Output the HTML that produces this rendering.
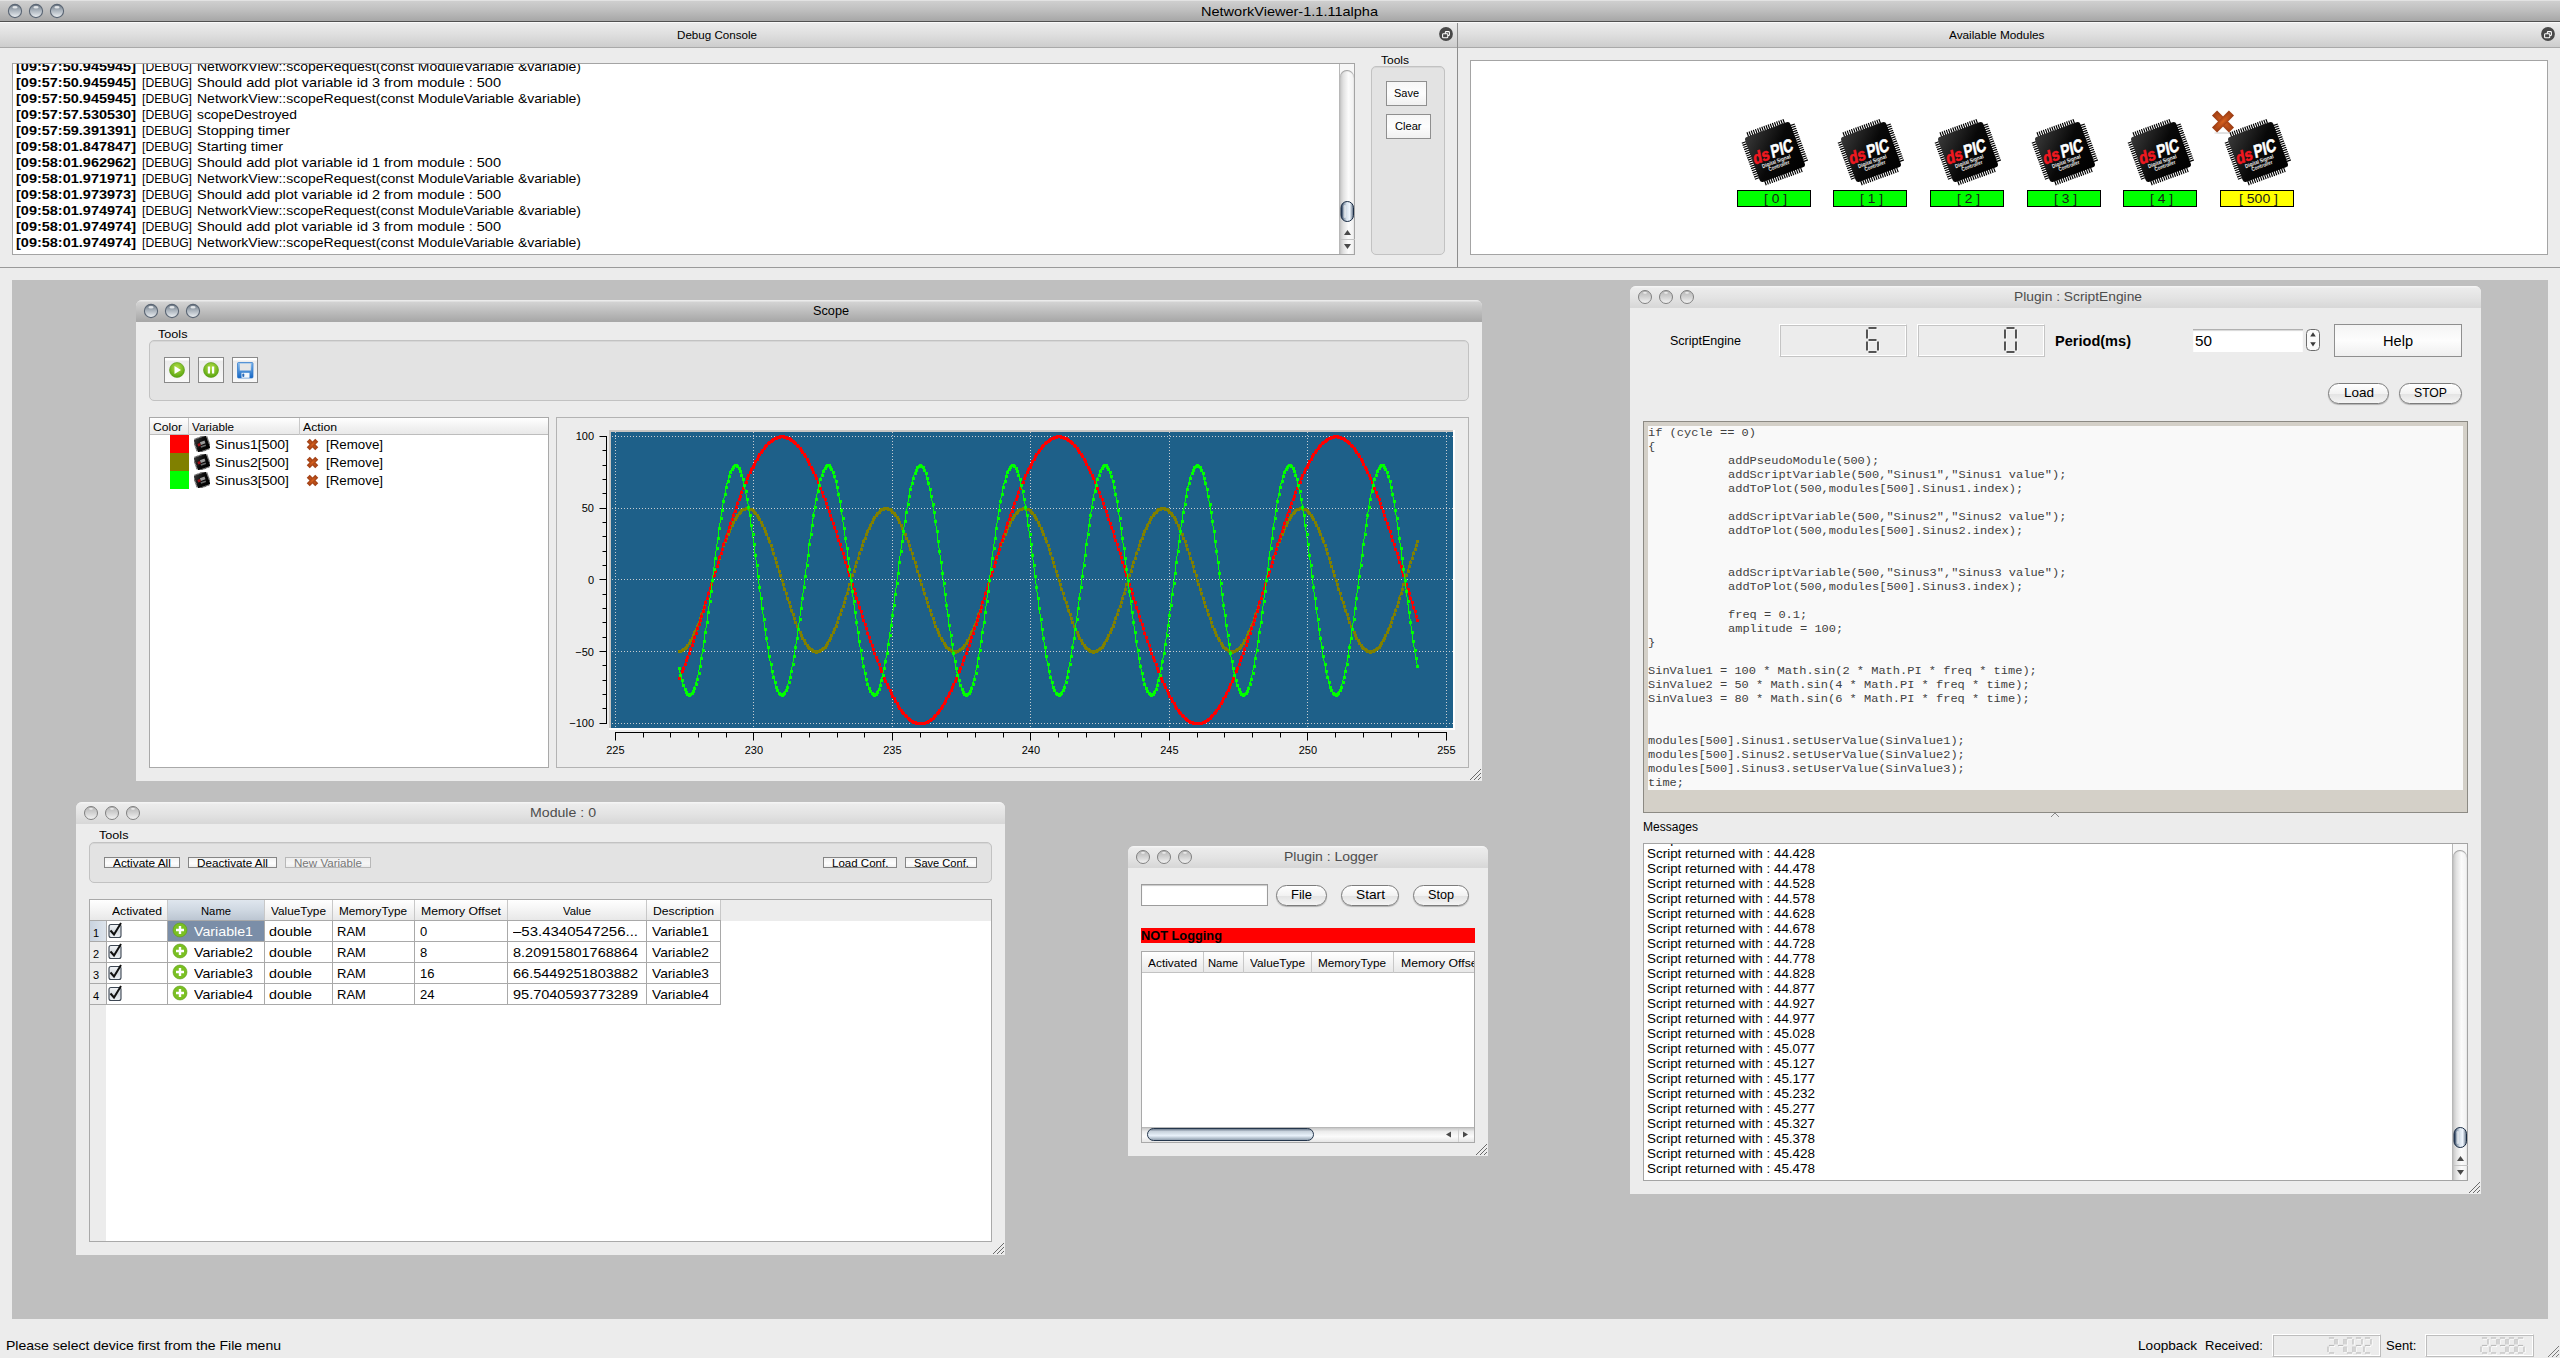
<!DOCTYPE html><html><head><meta charset="utf-8"><title>NetworkViewer</title><style>
html,body{margin:0;padding:0}
body{width:2560px;height:1358px;overflow:hidden;position:relative;background:#ececec;font-family:'Liberation Sans',sans-serif}
.a{position:absolute}
.t{white-space:pre;transform-origin:0 0}
</style></head><body><svg class="a" width="0" height="0" style="left:0;top:0">
<defs>
<linearGradient id="tlg" x1="0" y1="0" x2="0" y2="1">
 <stop offset="0" stop-color="#6f7a86"/><stop offset="0.45" stop-color="#a9b2bb"/><stop offset="1" stop-color="#eef1f4"/></linearGradient>
<linearGradient id="tlgi" x1="0" y1="0" x2="0" y2="1">
 <stop offset="0" stop-color="#b4b4b4"/><stop offset="0.5" stop-color="#d2d2d2"/><stop offset="1" stop-color="#f4f4f4"/></linearGradient>
<linearGradient id="cbg" x1="0" y1="0" x2="0" y2="1">
 <stop offset="0" stop-color="#f4f6f8"/><stop offset="0.5" stop-color="#d6dce2"/><stop offset="1" stop-color="#eef2f6"/></linearGradient>
<linearGradient id="flopg" x1="0" y1="0" x2="0" y2="1">
 <stop offset="0" stop-color="#8cc0f0"/><stop offset="1" stop-color="#1466c4"/></linearGradient>
<linearGradient id="thumbg" x1="0" y1="0" x2="1" y2="0">
 <stop offset="0" stop-color="#1d3150"/><stop offset="0.2" stop-color="#7d8ea2"/><stop offset="0.45" stop-color="#d8e2ec"/><stop offset="0.7" stop-color="#f0f7ff"/><stop offset="1" stop-color="#56667a"/></linearGradient>
<linearGradient id="hthumbg" x1="0" y1="0" x2="0" y2="1">
 <stop offset="0" stop-color="#5d6c7e"/><stop offset="0.25" stop-color="#c9d3dd"/><stop offset="0.6" stop-color="#e9f2fb"/><stop offset="1" stop-color="#8796a6"/></linearGradient>
<linearGradient id="chipg" x1="0" y1="0" x2="1" y2="1">
 <stop offset="0" stop-color="#3a3a3a"/><stop offset="0.5" stop-color="#080808"/><stop offset="1" stop-color="#000"/></linearGradient>
<radialGradient id="xg" cx="0.5" cy="0.5" r="0.7">
 <stop offset="0" stop-color="#d9621f"/><stop offset="1" stop-color="#8f3410"/></radialGradient>
<radialGradient id="greeng" cx="0.5" cy="0.35" r="0.6">
 <stop offset="0" stop-color="#b6e04a"/><stop offset="1" stop-color="#5ea812"/></radialGradient>
</defs></svg><div class="a" style="left:0px;top:0px;width:2560px;height:21px;background:linear-gradient(#e2e2e2 0px,#e2e2e2 1px,#cfcfcf 1px,#bfbfbf 10px,#a9a9a9 20px)"></div>
<div class="a" style="left:0px;top:21px;width:2560px;height:1px;background:#515151"></div>
<div class="a" style="left:0px;top:22px;width:2560px;height:1px;background:#fafafa"></div>
<svg class="a" style="left:7px;top:3px" width="16" height="16"><circle cx="8" cy="8" r="6.6" fill="url(#tlg)" stroke="#5b6674" stroke-width="1.1"/><ellipse cx="8" cy="4.2" rx="2.6" ry="1.2" fill="#fff" opacity="0.75"/></svg>
<svg class="a" style="left:28px;top:3px" width="16" height="16"><circle cx="8" cy="8" r="6.6" fill="url(#tlg)" stroke="#5b6674" stroke-width="1.1"/><ellipse cx="8" cy="4.2" rx="2.6" ry="1.2" fill="#fff" opacity="0.75"/></svg>
<svg class="a" style="left:49px;top:3px" width="16" height="16"><circle cx="8" cy="8" r="6.6" fill="url(#tlg)" stroke="#5b6674" stroke-width="1.1"/><ellipse cx="8" cy="4.2" rx="2.6" ry="1.2" fill="#fff" opacity="0.75"/></svg>
<div class="a t" style="left:1200.50px;top:5px;font-size:13px;line-height:13px;font-family:'Liberation Sans';color:#000;transform:scaleX(1.1168);">NetworkViewer-1.1.11alpha</div>
<div class="a" style="left:0px;top:23px;width:2560px;height:24px;background:linear-gradient(#ececec,#dedede 50%,#cdcdcd)"></div>
<div class="a" style="left:0px;top:47px;width:2560px;height:1px;background:#a9a9a9"></div>
<div class="a" style="left:1457px;top:23px;width:1px;height:245px;background:#8e8e8e"></div>
<div class="a t" style="left:677.00px;top:30px;font-size:11px;line-height:11px;font-family:'Liberation Sans';color:#000;transform:scaleX(1.0550);">Debug Console</div>
<div class="a t" style="left:1949.25px;top:30px;font-size:11px;line-height:11px;font-family:'Liberation Sans';color:#000;transform:scaleX(1.0721);">Available Modules</div>
<svg class="a" style="left:1438px;top:26px" width="16" height="16"><circle cx="8" cy="8" r="6.9" fill="#484848"/><rect x="7.3" y="5.6" width="4.1" height="3.9" rx="0.8" fill="none" stroke="#fff" stroke-width="1.05"/><rect x="4.6" y="7.8" width="5.2" height="3.9" rx="0.8" fill="#484848" stroke="#fff" stroke-width="1.05"/></svg>
<svg class="a" style="left:2540px;top:26px" width="16" height="16"><circle cx="8" cy="8" r="6.9" fill="#484848"/><rect x="7.3" y="5.6" width="4.1" height="3.9" rx="0.8" fill="none" stroke="#fff" stroke-width="1.05"/><rect x="4.6" y="7.8" width="5.2" height="3.9" rx="0.8" fill="#484848" stroke="#fff" stroke-width="1.05"/></svg>
<div class="a" style="left:0px;top:267px;width:2560px;height:1px;background:#9a9a9a"></div>
<div class="a" style="left:12px;top:280px;width:2536px;height:1039px;background:#bfbfbf"></div>
<div class="a" style="left:12px;top:63px;width:1343px;height:192px;background:#fff;border:1px solid #a4a4a4;box-sizing:border-box"></div>
<div class="a" style="left:13px;top:64px;width:1326px;height:190px;overflow:hidden">
<div class="a t" style="left:3.00px;top:-4px;font-size:13px;line-height:13px;font-family:'Liberation Sans';font-weight:bold;color:#000;transform:scaleX(1.1143);">[09:57:50.945945]</div>
<div class="a t" style="left:129.00px;top:-4px;font-size:13px;line-height:13px;font-family:'Liberation Sans';color:#000;transform:scaleX(0.9354);">[DEBUG]</div>
<div class="a t" style="left:184.00px;top:-4px;font-size:13px;line-height:13px;font-family:'Liberation Sans';color:#000;transform:scaleX(1.0772);">NetworkView::scopeRequest(const ModuleVariable &amp;variable)</div>
<div class="a t" style="left:3.00px;top:12px;font-size:13px;line-height:13px;font-family:'Liberation Sans';font-weight:bold;color:#000;transform:scaleX(1.1143);">[09:57:50.945945]</div>
<div class="a t" style="left:129.00px;top:12px;font-size:13px;line-height:13px;font-family:'Liberation Sans';color:#000;transform:scaleX(0.9354);">[DEBUG]</div>
<div class="a t" style="left:184.00px;top:12px;font-size:13px;line-height:13px;font-family:'Liberation Sans';color:#000;transform:scaleX(1.1158);">Should add plot variable id 3 from module : 500</div>
<div class="a t" style="left:3.00px;top:28px;font-size:13px;line-height:13px;font-family:'Liberation Sans';font-weight:bold;color:#000;transform:scaleX(1.1143);">[09:57:50.945945]</div>
<div class="a t" style="left:129.00px;top:28px;font-size:13px;line-height:13px;font-family:'Liberation Sans';color:#000;transform:scaleX(0.9354);">[DEBUG]</div>
<div class="a t" style="left:184.00px;top:28px;font-size:13px;line-height:13px;font-family:'Liberation Sans';color:#000;transform:scaleX(1.0772);">NetworkView::scopeRequest(const ModuleVariable &amp;variable)</div>
<div class="a t" style="left:3.00px;top:44px;font-size:13px;line-height:13px;font-family:'Liberation Sans';font-weight:bold;color:#000;transform:scaleX(1.1143);">[09:57:57.530530]</div>
<div class="a t" style="left:129.00px;top:44px;font-size:13px;line-height:13px;font-family:'Liberation Sans';color:#000;transform:scaleX(0.9354);">[DEBUG]</div>
<div class="a t" style="left:184.00px;top:44px;font-size:13px;line-height:13px;font-family:'Liberation Sans';color:#000;transform:scaleX(1.0645);">scopeDestroyed</div>
<div class="a t" style="left:3.00px;top:60px;font-size:13px;line-height:13px;font-family:'Liberation Sans';font-weight:bold;color:#000;transform:scaleX(1.1143);">[09:57:59.391391]</div>
<div class="a t" style="left:129.00px;top:60px;font-size:13px;line-height:13px;font-family:'Liberation Sans';color:#000;transform:scaleX(0.9354);">[DEBUG]</div>
<div class="a t" style="left:184.00px;top:60px;font-size:13px;line-height:13px;font-family:'Liberation Sans';color:#000;transform:scaleX(1.1095);">Stopping timer</div>
<div class="a t" style="left:3.00px;top:76px;font-size:13px;line-height:13px;font-family:'Liberation Sans';font-weight:bold;color:#000;transform:scaleX(1.1143);">[09:58:01.847847]</div>
<div class="a t" style="left:129.00px;top:76px;font-size:13px;line-height:13px;font-family:'Liberation Sans';color:#000;transform:scaleX(0.9354);">[DEBUG]</div>
<div class="a t" style="left:184.00px;top:76px;font-size:13px;line-height:13px;font-family:'Liberation Sans';color:#000;transform:scaleX(1.1125);">Starting timer</div>
<div class="a t" style="left:3.00px;top:92px;font-size:13px;line-height:13px;font-family:'Liberation Sans';font-weight:bold;color:#000;transform:scaleX(1.1143);">[09:58:01.962962]</div>
<div class="a t" style="left:129.00px;top:92px;font-size:13px;line-height:13px;font-family:'Liberation Sans';color:#000;transform:scaleX(0.9354);">[DEBUG]</div>
<div class="a t" style="left:184.00px;top:92px;font-size:13px;line-height:13px;font-family:'Liberation Sans';color:#000;transform:scaleX(1.1158);">Should add plot variable id 1 from module : 500</div>
<div class="a t" style="left:3.00px;top:108px;font-size:13px;line-height:13px;font-family:'Liberation Sans';font-weight:bold;color:#000;transform:scaleX(1.1143);">[09:58:01.971971]</div>
<div class="a t" style="left:129.00px;top:108px;font-size:13px;line-height:13px;font-family:'Liberation Sans';color:#000;transform:scaleX(0.9354);">[DEBUG]</div>
<div class="a t" style="left:184.00px;top:108px;font-size:13px;line-height:13px;font-family:'Liberation Sans';color:#000;transform:scaleX(1.0772);">NetworkView::scopeRequest(const ModuleVariable &amp;variable)</div>
<div class="a t" style="left:3.00px;top:124px;font-size:13px;line-height:13px;font-family:'Liberation Sans';font-weight:bold;color:#000;transform:scaleX(1.1143);">[09:58:01.973973]</div>
<div class="a t" style="left:129.00px;top:124px;font-size:13px;line-height:13px;font-family:'Liberation Sans';color:#000;transform:scaleX(0.9354);">[DEBUG]</div>
<div class="a t" style="left:184.00px;top:124px;font-size:13px;line-height:13px;font-family:'Liberation Sans';color:#000;transform:scaleX(1.1158);">Should add plot variable id 2 from module : 500</div>
<div class="a t" style="left:3.00px;top:140px;font-size:13px;line-height:13px;font-family:'Liberation Sans';font-weight:bold;color:#000;transform:scaleX(1.1143);">[09:58:01.974974]</div>
<div class="a t" style="left:129.00px;top:140px;font-size:13px;line-height:13px;font-family:'Liberation Sans';color:#000;transform:scaleX(0.9354);">[DEBUG]</div>
<div class="a t" style="left:184.00px;top:140px;font-size:13px;line-height:13px;font-family:'Liberation Sans';color:#000;transform:scaleX(1.0772);">NetworkView::scopeRequest(const ModuleVariable &amp;variable)</div>
<div class="a t" style="left:3.00px;top:156px;font-size:13px;line-height:13px;font-family:'Liberation Sans';font-weight:bold;color:#000;transform:scaleX(1.1143);">[09:58:01.974974]</div>
<div class="a t" style="left:129.00px;top:156px;font-size:13px;line-height:13px;font-family:'Liberation Sans';color:#000;transform:scaleX(0.9354);">[DEBUG]</div>
<div class="a t" style="left:184.00px;top:156px;font-size:13px;line-height:13px;font-family:'Liberation Sans';color:#000;transform:scaleX(1.1158);">Should add plot variable id 3 from module : 500</div>
<div class="a t" style="left:3.00px;top:172px;font-size:13px;line-height:13px;font-family:'Liberation Sans';font-weight:bold;color:#000;transform:scaleX(1.1143);">[09:58:01.974974]</div>
<div class="a t" style="left:129.00px;top:172px;font-size:13px;line-height:13px;font-family:'Liberation Sans';color:#000;transform:scaleX(0.9354);">[DEBUG]</div>
<div class="a t" style="left:184.00px;top:172px;font-size:13px;line-height:13px;font-family:'Liberation Sans';color:#000;transform:scaleX(1.0772);">NetworkView::scopeRequest(const ModuleVariable &amp;variable)</div>
</div>
<div class="a" style="left:1339px;top:64px;width:14px;height:190px;background:#f6f6f6;border-left:1px solid #b8b8b8"></div>
<div class="a" style="left:1340px;top:70px;width:14px;height:184px;border-radius:7px 7px 0 0;background:linear-gradient(90deg,#c6c6c6 0%,#e2e2e2 25%,#fbfbfb 60%,#f0f0f0 100%);box-shadow:inset 0 1px 1px #9a9a9a"></div>
<svg class="a" style="left:1340px;top:201px" width="15" height="21"><rect x="1" y="0.5" width="12.5" height="20" rx="6.2" fill="url(#thumbg)" stroke="#1a2c44" stroke-width="1"/><rect x="3.5" y="4" width="2.5" height="13" rx="1.2" fill="#fff" opacity="0.55"/></svg>
<svg class="a" style="left:1340px;top:224px" width="15" height="30"><line x1="0" y1="15.5" x2="15" y2="15.5" stroke="#c4c4c4"/><path d="M4 11 L7.5 6 L11 11 Z" fill="#4a4a4a"/><path d="M4 20 L11 20 L7.5 25 Z" fill="#4a4a4a"/></svg>
<div class="a t" style="left:1381.00px;top:55px;font-size:11px;line-height:11px;font-family:'Liberation Sans';color:#000;transform:scaleX(1.0904);">Tools</div>
<div class="a" style="left:1371px;top:66px;width:74px;height:189px;background:#e3e3e3;border:1px solid #c2c2c2;border-radius:5px;box-sizing:border-box;box-shadow:inset 0 1px 0 #d6d6d6"></div>
<div class="a" style="left:1386px;top:81px;width:41px;height:25px;background:linear-gradient(#f6f6f6,#fdfdfd 50%,#f0f0f0);border:1px solid #8f8f8f;box-sizing:border-box"></div>
<div class="a t" style="left:1394.00px;top:88px;font-size:11px;line-height:11px;font-family:'Liberation Sans';color:#000;">Save</div>
<div class="a" style="left:1386px;top:114px;width:45px;height:25px;background:linear-gradient(#f6f6f6,#fdfdfd 50%,#f0f0f0);border:1px solid #8f8f8f;box-sizing:border-box"></div>
<div class="a t" style="left:1395.25px;top:121px;font-size:11px;line-height:11px;font-family:'Liberation Sans';color:#000;transform:scaleX(1.0081);">Clear</div>
<div class="a" style="left:1470px;top:60px;width:1078px;height:195px;background:#fff;border:1px solid #a4a4a4;box-sizing:border-box"></div>
<svg class="a" style="left:1700px;top:100px" width="620" height="100"><g transform="translate(75,52) rotate(-20)"><path d="M-20.16 -25.7 H20.16 M-20.16 25.7 H20.16 M-25.7 -20.16 V20.16 M25.7 -20.16 V20.16" fill="none" stroke="#000" stroke-width="5.0" stroke-dasharray="1.2 1.05"/><rect x="-24.0" y="-24.0" width="48.0" height="48.0" rx="3.0" fill="url(#chipg)"/><text x="-23.0" y="5.0" font-family="Liberation Sans" font-weight="bold" font-size="17.0" fill="#f01820" transform="skewX(-8)" textLength="17.0" lengthAdjust="spacingAndGlyphs" stroke="#f01820" stroke-width="0.6">ds</text><text x="-4.0" y="5.0" font-family="Liberation Sans" font-weight="bold" font-size="18.0" fill="#fff" transform="skewX(-8)" textLength="23.0" lengthAdjust="spacingAndGlyphs" stroke="#fff" stroke-width="0.6">PIC</text><text x="-17.0" y="11.0" font-family="Liberation Sans" font-weight="bold" font-size="5.5" fill="#f0f0f0" textLength="30.0" lengthAdjust="spacingAndGlyphs">Digital Signal</text><text x="-12.0" y="16.0" font-family="Liberation Sans" font-weight="bold" font-size="5.5" fill="#f0f0f0" textLength="22.0" lengthAdjust="spacingAndGlyphs">Controller</text></g><g transform="translate(171,52) rotate(-20)"><path d="M-20.16 -25.7 H20.16 M-20.16 25.7 H20.16 M-25.7 -20.16 V20.16 M25.7 -20.16 V20.16" fill="none" stroke="#000" stroke-width="5.0" stroke-dasharray="1.2 1.05"/><rect x="-24.0" y="-24.0" width="48.0" height="48.0" rx="3.0" fill="url(#chipg)"/><text x="-23.0" y="5.0" font-family="Liberation Sans" font-weight="bold" font-size="17.0" fill="#f01820" transform="skewX(-8)" textLength="17.0" lengthAdjust="spacingAndGlyphs" stroke="#f01820" stroke-width="0.6">ds</text><text x="-4.0" y="5.0" font-family="Liberation Sans" font-weight="bold" font-size="18.0" fill="#fff" transform="skewX(-8)" textLength="23.0" lengthAdjust="spacingAndGlyphs" stroke="#fff" stroke-width="0.6">PIC</text><text x="-17.0" y="11.0" font-family="Liberation Sans" font-weight="bold" font-size="5.5" fill="#f0f0f0" textLength="30.0" lengthAdjust="spacingAndGlyphs">Digital Signal</text><text x="-12.0" y="16.0" font-family="Liberation Sans" font-weight="bold" font-size="5.5" fill="#f0f0f0" textLength="22.0" lengthAdjust="spacingAndGlyphs">Controller</text></g><g transform="translate(268,52) rotate(-20)"><path d="M-20.16 -25.7 H20.16 M-20.16 25.7 H20.16 M-25.7 -20.16 V20.16 M25.7 -20.16 V20.16" fill="none" stroke="#000" stroke-width="5.0" stroke-dasharray="1.2 1.05"/><rect x="-24.0" y="-24.0" width="48.0" height="48.0" rx="3.0" fill="url(#chipg)"/><text x="-23.0" y="5.0" font-family="Liberation Sans" font-weight="bold" font-size="17.0" fill="#f01820" transform="skewX(-8)" textLength="17.0" lengthAdjust="spacingAndGlyphs" stroke="#f01820" stroke-width="0.6">ds</text><text x="-4.0" y="5.0" font-family="Liberation Sans" font-weight="bold" font-size="18.0" fill="#fff" transform="skewX(-8)" textLength="23.0" lengthAdjust="spacingAndGlyphs" stroke="#fff" stroke-width="0.6">PIC</text><text x="-17.0" y="11.0" font-family="Liberation Sans" font-weight="bold" font-size="5.5" fill="#f0f0f0" textLength="30.0" lengthAdjust="spacingAndGlyphs">Digital Signal</text><text x="-12.0" y="16.0" font-family="Liberation Sans" font-weight="bold" font-size="5.5" fill="#f0f0f0" textLength="22.0" lengthAdjust="spacingAndGlyphs">Controller</text></g><g transform="translate(365,52) rotate(-20)"><path d="M-20.16 -25.7 H20.16 M-20.16 25.7 H20.16 M-25.7 -20.16 V20.16 M25.7 -20.16 V20.16" fill="none" stroke="#000" stroke-width="5.0" stroke-dasharray="1.2 1.05"/><rect x="-24.0" y="-24.0" width="48.0" height="48.0" rx="3.0" fill="url(#chipg)"/><text x="-23.0" y="5.0" font-family="Liberation Sans" font-weight="bold" font-size="17.0" fill="#f01820" transform="skewX(-8)" textLength="17.0" lengthAdjust="spacingAndGlyphs" stroke="#f01820" stroke-width="0.6">ds</text><text x="-4.0" y="5.0" font-family="Liberation Sans" font-weight="bold" font-size="18.0" fill="#fff" transform="skewX(-8)" textLength="23.0" lengthAdjust="spacingAndGlyphs" stroke="#fff" stroke-width="0.6">PIC</text><text x="-17.0" y="11.0" font-family="Liberation Sans" font-weight="bold" font-size="5.5" fill="#f0f0f0" textLength="30.0" lengthAdjust="spacingAndGlyphs">Digital Signal</text><text x="-12.0" y="16.0" font-family="Liberation Sans" font-weight="bold" font-size="5.5" fill="#f0f0f0" textLength="22.0" lengthAdjust="spacingAndGlyphs">Controller</text></g><g transform="translate(461,52) rotate(-20)"><path d="M-20.16 -25.7 H20.16 M-20.16 25.7 H20.16 M-25.7 -20.16 V20.16 M25.7 -20.16 V20.16" fill="none" stroke="#000" stroke-width="5.0" stroke-dasharray="1.2 1.05"/><rect x="-24.0" y="-24.0" width="48.0" height="48.0" rx="3.0" fill="url(#chipg)"/><text x="-23.0" y="5.0" font-family="Liberation Sans" font-weight="bold" font-size="17.0" fill="#f01820" transform="skewX(-8)" textLength="17.0" lengthAdjust="spacingAndGlyphs" stroke="#f01820" stroke-width="0.6">ds</text><text x="-4.0" y="5.0" font-family="Liberation Sans" font-weight="bold" font-size="18.0" fill="#fff" transform="skewX(-8)" textLength="23.0" lengthAdjust="spacingAndGlyphs" stroke="#fff" stroke-width="0.6">PIC</text><text x="-17.0" y="11.0" font-family="Liberation Sans" font-weight="bold" font-size="5.5" fill="#f0f0f0" textLength="30.0" lengthAdjust="spacingAndGlyphs">Digital Signal</text><text x="-12.0" y="16.0" font-family="Liberation Sans" font-weight="bold" font-size="5.5" fill="#f0f0f0" textLength="22.0" lengthAdjust="spacingAndGlyphs">Controller</text></g><g transform="translate(558,52) rotate(-20)"><path d="M-20.16 -25.7 H20.16 M-20.16 25.7 H20.16 M-25.7 -20.16 V20.16 M25.7 -20.16 V20.16" fill="none" stroke="#000" stroke-width="5.0" stroke-dasharray="1.2 1.05"/><rect x="-24.0" y="-24.0" width="48.0" height="48.0" rx="3.0" fill="url(#chipg)"/><text x="-23.0" y="5.0" font-family="Liberation Sans" font-weight="bold" font-size="17.0" fill="#f01820" transform="skewX(-8)" textLength="17.0" lengthAdjust="spacingAndGlyphs" stroke="#f01820" stroke-width="0.6">ds</text><text x="-4.0" y="5.0" font-family="Liberation Sans" font-weight="bold" font-size="18.0" fill="#fff" transform="skewX(-8)" textLength="23.0" lengthAdjust="spacingAndGlyphs" stroke="#fff" stroke-width="0.6">PIC</text><text x="-17.0" y="11.0" font-family="Liberation Sans" font-weight="bold" font-size="5.5" fill="#f0f0f0" textLength="30.0" lengthAdjust="spacingAndGlyphs">Digital Signal</text><text x="-12.0" y="16.0" font-family="Liberation Sans" font-weight="bold" font-size="5.5" fill="#f0f0f0" textLength="22.0" lengthAdjust="spacingAndGlyphs">Controller</text></g><g transform="translate(523,21.5)"><ellipse cx="0" cy="11.5" rx="9" ry="1" fill="#000" opacity="0.12"/><g transform="rotate(45)"><rect x="-12" y="-3.6" width="24" height="7.2" fill="url(#xg)"/><rect x="-3.6" y="-12" width="7.2" height="24" fill="url(#xg)"/></g></g></svg>
<div class="a" style="left:1737px;top:190px;width:74px;height:17px;background:#00ff00;border:1px solid #000;box-sizing:border-box"></div>
<div class="a t" style="left:1763.50px;top:193px;font-size:12px;line-height:12px;font-family:'Liberation Sans';color:#1a1a1a;transform:scaleX(1.1494);">[ 0 ]</div>
<div class="a" style="left:1833px;top:190px;width:74px;height:17px;background:#00ff00;border:1px solid #000;box-sizing:border-box"></div>
<div class="a t" style="left:1859.50px;top:193px;font-size:12px;line-height:12px;font-family:'Liberation Sans';color:#1a1a1a;transform:scaleX(1.1494);">[ 1 ]</div>
<div class="a" style="left:1930px;top:190px;width:74px;height:17px;background:#00ff00;border:1px solid #000;box-sizing:border-box"></div>
<div class="a t" style="left:1956.50px;top:193px;font-size:12px;line-height:12px;font-family:'Liberation Sans';color:#1a1a1a;transform:scaleX(1.1494);">[ 2 ]</div>
<div class="a" style="left:2027px;top:190px;width:74px;height:17px;background:#00ff00;border:1px solid #000;box-sizing:border-box"></div>
<div class="a t" style="left:2053.50px;top:193px;font-size:12px;line-height:12px;font-family:'Liberation Sans';color:#1a1a1a;transform:scaleX(1.1494);">[ 3 ]</div>
<div class="a" style="left:2123px;top:190px;width:74px;height:17px;background:#00ff00;border:1px solid #000;box-sizing:border-box"></div>
<div class="a t" style="left:2149.50px;top:193px;font-size:12px;line-height:12px;font-family:'Liberation Sans';color:#1a1a1a;transform:scaleX(1.1494);">[ 4 ]</div>
<div class="a" style="left:2220px;top:190px;width:74px;height:17px;background:#ffff00;border:1px solid #000;box-sizing:border-box"></div>
<div class="a t" style="left:2238.50px;top:193px;font-size:12px;line-height:12px;font-family:'Liberation Sans';color:#1a1a1a;transform:scaleX(1.1692);">[ 500 ]</div>
<div class="a" style="left:136px;top:300px;width:1346px;height:481px;background:#ececec;border-radius:6px 6px 0 0;overflow:hidden"><div class="a" style="left:0;top:0;width:1346px;height:22px;background:linear-gradient(#ebebeb 0px,#ebebeb 1px,#d3d3d3 2px,#bcbcbc 12px,#a8a8a8 21px)"></div></div>
<svg class="a" style="left:143px;top:303px" width="16" height="16"><circle cx="8" cy="8" r="6.6" fill="url(#tlg)" stroke="#5b6674" stroke-width="1.1"/><ellipse cx="8" cy="4.2" rx="2.6" ry="1.2" fill="#fff" opacity="0.75"/></svg>
<svg class="a" style="left:164px;top:303px" width="16" height="16"><circle cx="8" cy="8" r="6.6" fill="url(#tlg)" stroke="#5b6674" stroke-width="1.1"/><ellipse cx="8" cy="4.2" rx="2.6" ry="1.2" fill="#fff" opacity="0.75"/></svg>
<svg class="a" style="left:185px;top:303px" width="16" height="16"><circle cx="8" cy="8" r="6.6" fill="url(#tlg)" stroke="#5b6674" stroke-width="1.1"/><ellipse cx="8" cy="4.2" rx="2.6" ry="1.2" fill="#fff" opacity="0.75"/></svg>
<div class="a t" style="left:813.00px;top:304px;font-size:13px;line-height:13px;font-family:'Liberation Sans';color:#000;transform:scaleX(0.9766);">Scope</div>
<div class="a t" style="left:158.00px;top:329px;font-size:11px;line-height:11px;font-family:'Liberation Sans';color:#000;transform:scaleX(1.1488);">Tools</div>
<div class="a" style="left:149px;top:340px;width:1320px;height:61px;background:#e3e3e3;border:1px solid #c2c2c2;border-radius:5px;box-sizing:border-box;box-shadow:inset 0 1px 0 #d6d6d6"></div>
<div class="a" style="left:164px;top:357px;width:26px;height:26px;background:linear-gradient(#ffffff 0px,#ffffff 2px,#ececec 3px,#f3f3f3 60%,#f8f8f8);border:1px solid #8a8a8a;box-sizing:border-box"></div>
<div class="a" style="left:198px;top:357px;width:26px;height:26px;background:linear-gradient(#ffffff 0px,#ffffff 2px,#ececec 3px,#f3f3f3 60%,#f8f8f8);border:1px solid #8a8a8a;box-sizing:border-box"></div>
<div class="a" style="left:232px;top:357px;width:26px;height:26px;background:linear-gradient(#ffffff 0px,#ffffff 2px,#ececec 3px,#f3f3f3 60%,#f8f8f8);border:1px solid #8a8a8a;box-sizing:border-box"></div>
<svg class="a" style="left:164px;top:357px" width="100" height="26"><circle cx="13" cy="13" r="7.5" fill="url(#greeng)" stroke="#5a9a18" stroke-width="0.6"/><path d="M10.5 9 L17 13 L10.5 17 Z" fill="#fff"/><circle cx="47" cy="13" r="7.5" fill="url(#greeng)" stroke="#5a9a18" stroke-width="0.6"/><rect x="43.8" y="9.5" width="2.2" height="7" fill="#fff"/><rect x="48" y="9.5" width="2.2" height="7" fill="#fff"/><rect x="73.5" y="5.5" width="15.5" height="15.5" rx="1" fill="url(#flopg)" stroke="#2a74c8" stroke-width="0.7"/><rect x="75.8" y="6.5" width="11" height="7" fill="#e6e6e6"/><rect x="77.5" y="15.8" width="8" height="5" fill="#f4f8fc"/><rect x="78.3" y="16.5" width="2" height="3.5" rx="1" fill="#2a6ab8"/></svg>
<div class="a" style="left:149px;top:417px;width:400px;height:351px;background:#fff;border:1px solid #a9a9a9;box-sizing:border-box"></div>
<div class="a" style="left:150px;top:418px;width:398px;height:17px;background:linear-gradient(#ffffff,#f3f3f3 50%,#e9e9e9);border-bottom:1px solid #bdbdbd;box-sizing:border-box"></div>
<div class="a" style="left:188px;top:418px;width:1px;height:17px;background:#c9c9c9"></div>
<div class="a" style="left:299px;top:418px;width:1px;height:17px;background:#c9c9c9"></div>
<div class="a t" style="left:153.00px;top:422px;font-size:11px;line-height:11px;font-family:'Liberation Sans';color:#000;transform:scaleX(1.1032);">Color</div>
<div class="a t" style="left:192.00px;top:422px;font-size:11px;line-height:11px;font-family:'Liberation Sans';color:#000;transform:scaleX(1.0622);">Variable</div>
<div class="a t" style="left:303.00px;top:422px;font-size:11px;line-height:11px;font-family:'Liberation Sans';color:#000;transform:scaleX(1.1121);">Action</div>
<div class="a" style="left:170px;top:435px;width:19px;height:18px;background:#ff0000"></div>
<svg class="a" style="left:194px;top:436px" width="16" height="16"><g transform="translate(8,8) rotate(-20)"><path d="M-5.4432 -6.939 H5.4432 M-5.4432 6.939 H5.4432 M-6.939 -5.4432 V5.4432 M6.939 -5.4432 V5.4432" fill="none" stroke="#000" stroke-width="1.35" stroke-dasharray="0.324 0.28350000000000003"/><rect x="-6.48" y="-6.48" width="12.96" height="12.96" rx="0.81" fill="url(#chipg)"/><rect x="-4.32" y="-1.62" width="2.7" height="2.7" fill="#a01018"/><rect x="-1.35" y="-2.43" width="4.86" height="2.97" fill="#9a9a9a"/><rect x="-2.16" y="1.62" width="5.4" height="1.62" fill="#6a6a6a"/></g></svg>
<div class="a t" style="left:215.00px;top:438px;font-size:13px;line-height:13px;font-family:'Liberation Sans';color:#000;transform:scaleX(1.0777);">Sinus1[500]</div>
<svg class="a" style="left:306px;top:438px" width="13" height="14"><g transform="translate(6.5,6.5) rotate(45)"><rect x="-6" y="-2.1" width="12" height="4.2" fill="url(#xg)"/><rect x="-2.1" y="-6" width="4.2" height="12" fill="url(#xg)"/></g></svg>
<div class="a t" style="left:326.00px;top:438px;font-size:13px;line-height:13px;font-family:'Liberation Sans';color:#000;transform:scaleX(1.0246);">[Remove]</div>
<div class="a" style="left:170px;top:453px;width:19px;height:18px;background:#808000"></div>
<svg class="a" style="left:194px;top:454px" width="16" height="16"><g transform="translate(8,8) rotate(-20)"><path d="M-5.4432 -6.939 H5.4432 M-5.4432 6.939 H5.4432 M-6.939 -5.4432 V5.4432 M6.939 -5.4432 V5.4432" fill="none" stroke="#000" stroke-width="1.35" stroke-dasharray="0.324 0.28350000000000003"/><rect x="-6.48" y="-6.48" width="12.96" height="12.96" rx="0.81" fill="url(#chipg)"/><rect x="-4.32" y="-1.62" width="2.7" height="2.7" fill="#a01018"/><rect x="-1.35" y="-2.43" width="4.86" height="2.97" fill="#9a9a9a"/><rect x="-2.16" y="1.62" width="5.4" height="1.62" fill="#6a6a6a"/></g></svg>
<div class="a t" style="left:215.00px;top:456px;font-size:13px;line-height:13px;font-family:'Liberation Sans';color:#000;transform:scaleX(1.0777);">Sinus2[500]</div>
<svg class="a" style="left:306px;top:456px" width="13" height="14"><g transform="translate(6.5,6.5) rotate(45)"><rect x="-6" y="-2.1" width="12" height="4.2" fill="url(#xg)"/><rect x="-2.1" y="-6" width="4.2" height="12" fill="url(#xg)"/></g></svg>
<div class="a t" style="left:326.00px;top:456px;font-size:13px;line-height:13px;font-family:'Liberation Sans';color:#000;transform:scaleX(1.0246);">[Remove]</div>
<div class="a" style="left:170px;top:471px;width:19px;height:18px;background:#00ff00"></div>
<svg class="a" style="left:194px;top:472px" width="16" height="16"><g transform="translate(8,8) rotate(-20)"><path d="M-5.4432 -6.939 H5.4432 M-5.4432 6.939 H5.4432 M-6.939 -5.4432 V5.4432 M6.939 -5.4432 V5.4432" fill="none" stroke="#000" stroke-width="1.35" stroke-dasharray="0.324 0.28350000000000003"/><rect x="-6.48" y="-6.48" width="12.96" height="12.96" rx="0.81" fill="url(#chipg)"/><rect x="-4.32" y="-1.62" width="2.7" height="2.7" fill="#a01018"/><rect x="-1.35" y="-2.43" width="4.86" height="2.97" fill="#9a9a9a"/><rect x="-2.16" y="1.62" width="5.4" height="1.62" fill="#6a6a6a"/></g></svg>
<div class="a t" style="left:215.00px;top:474px;font-size:13px;line-height:13px;font-family:'Liberation Sans';color:#000;transform:scaleX(1.0777);">Sinus3[500]</div>
<svg class="a" style="left:306px;top:474px" width="13" height="14"><g transform="translate(6.5,6.5) rotate(45)"><rect x="-6" y="-2.1" width="12" height="4.2" fill="url(#xg)"/><rect x="-2.1" y="-6" width="4.2" height="12" fill="url(#xg)"/></g></svg>
<div class="a t" style="left:326.00px;top:474px;font-size:13px;line-height:13px;font-family:'Liberation Sans';color:#000;transform:scaleX(1.0246);">[Remove]</div>
<svg class="a" style="left:1468px;top:767px" width="14" height="14"><path d="M2 13 L13 2 M6 13 L13 6 M10 13 L13 10" stroke="#6a6a6a" stroke-width="1"/></svg>
<div class="a" style="left:556px;top:417px;width:913px;height:351px;background:#ececec;border:1px solid #b3b3b3;box-sizing:border-box"></div>
<svg class="a" style="left:0;top:0" width="1500" height="800"><rect x="609" y="430" width="846" height="300" fill="#1e6089"/><rect x="609" y="430" width="846" height="2" fill="#c9c6c3"/><rect x="609" y="430" width="2" height="300" fill="#c9c6c3"/><rect x="1453" y="430" width="2" height="300" fill="#ffffff"/><rect x="609" y="728" width="846" height="2" fill="#ffffff"/><path d="M612 436.5 H1454 M612 508.5 H1454 M612 579.5 H1454 M612 651.5 H1454 M612 723.5 H1454 M615.5 432 V729 M753.5 432 V729 M892.5 432 V729 M1030.5 432 V729 M1169.5 432 V729 M1307.5 432 V729 M1446.5 432 V729" stroke="#c8ccd0" stroke-width="1" stroke-dasharray="1 2" fill="none"/><polyline points="679.1,651.4 680.5,651.0 681.9,650.3 683.3,649.3 684.7,648.1 686.0,646.5 687.4,644.7 688.8,642.7 690.2,640.4 691.6,637.9 693.0,635.1 694.3,632.1 695.7,628.9 697.1,625.6 698.5,622.0 699.9,618.3 701.3,614.4 702.7,610.4 704.0,606.3 705.4,602.0 706.8,597.7 708.2,593.3 709.6,588.8 711.0,584.4 712.4,579.8 713.7,575.3 715.1,570.9 716.5,566.4 717.9,562.0 719.3,557.7 720.7,553.4 722.0,549.3 723.4,545.3 724.8,541.4 726.2,537.7 727.6,534.1 729.0,530.8 730.4,527.6 731.7,524.6 733.1,521.8 734.5,519.3 735.9,517.0 737.3,515.0 738.7,513.2 740.1,511.6 741.4,510.4 742.8,509.4 744.2,508.7 745.6,508.3 747.0,508.1 748.4,508.3 749.7,508.7 751.1,509.4 752.5,510.4 753.9,511.6 755.3,513.2 756.7,515.0 758.1,517.0 759.4,519.3 760.8,521.8 762.2,524.6 763.6,527.6 765.0,530.8 766.4,534.1 767.8,537.7 769.1,541.4 770.5,545.3 771.9,549.3 773.3,553.4 774.7,557.7 776.1,562.0 777.4,566.4 778.8,570.9 780.2,575.3 781.6,579.9 783.0,584.4 784.4,588.8 785.8,593.3 787.1,597.7 788.5,602.0 789.9,606.3 791.3,610.4 792.7,614.4 794.1,618.3 795.5,622.0 796.8,625.6 798.2,628.9 799.6,632.1 801.0,635.1 802.4,637.9 803.8,640.4 805.1,642.7 806.5,644.7 807.9,646.5 809.3,648.1 810.7,649.3 812.1,650.3 813.5,651.0 814.8,651.4 816.2,651.6 817.6,651.4 819.0,651.0 820.4,650.3 821.8,649.3 823.2,648.1 824.5,646.5 825.9,644.7 827.3,642.7 828.7,640.4 830.1,637.9 831.5,635.1 832.8,632.1 834.2,628.9 835.6,625.6 837.0,622.0 838.4,618.3 839.8,614.4 841.2,610.4 842.5,606.3 843.9,602.0 845.3,597.7 846.7,593.3 848.1,588.8 849.5,584.4 850.9,579.8 852.2,575.3 853.6,570.9 855.0,566.4 856.4,562.0 857.8,557.7 859.2,553.4 860.5,549.3 861.9,545.3 863.3,541.4 864.7,537.7 866.1,534.1 867.5,530.8 868.9,527.6 870.2,524.6 871.6,521.8 873.0,519.3 874.4,517.0 875.8,515.0 877.2,513.2 878.6,511.6 879.9,510.4 881.3,509.4 882.7,508.7 884.1,508.3 885.5,508.1 886.9,508.3 888.2,508.7 889.6,509.4 891.0,510.4 892.4,511.6 893.8,513.2 895.2,515.0 896.6,517.0 897.9,519.3 899.3,521.8 900.7,524.6 902.1,527.6 903.5,530.8 904.9,534.1 906.3,537.7 907.6,541.4 909.0,545.3 910.4,549.3 911.8,553.4 913.2,557.7 914.6,562.0 915.9,566.4 917.3,570.9 918.7,575.3 920.1,579.9 921.5,584.4 922.9,588.8 924.3,593.3 925.6,597.7 927.0,602.0 928.4,606.3 929.8,610.4 931.2,614.4 932.6,618.3 934.0,622.0 935.3,625.6 936.7,628.9 938.1,632.1 939.5,635.1 940.9,637.9 942.3,640.4 943.6,642.7 945.0,644.7 946.4,646.5 947.8,648.1 949.2,649.3 950.6,650.3 952.0,651.0 953.3,651.4 954.7,651.6 956.1,651.4 957.5,651.0 958.9,650.3 960.3,649.3 961.7,648.1 963.0,646.5 964.4,644.7 965.8,642.7 967.2,640.4 968.6,637.9 970.0,635.1 971.3,632.1 972.7,628.9 974.1,625.6 975.5,622.0 976.9,618.3 978.3,614.4 979.7,610.4 981.0,606.3 982.4,602.0 983.8,597.7 985.2,593.3 986.6,588.8 988.0,584.4 989.4,579.8 990.7,575.3 992.1,570.9 993.5,566.4 994.9,562.0 996.3,557.7 997.7,553.4 999.0,549.3 1000.4,545.3 1001.8,541.4 1003.2,537.7 1004.6,534.1 1006.0,530.8 1007.4,527.6 1008.7,524.6 1010.1,521.8 1011.5,519.3 1012.9,517.0 1014.3,515.0 1015.7,513.2 1017.1,511.6 1018.4,510.4 1019.8,509.4 1021.2,508.7 1022.6,508.3 1024.0,508.1 1025.4,508.3 1026.7,508.7 1028.1,509.4 1029.5,510.4 1030.9,511.6 1032.3,513.2 1033.7,515.0 1035.1,517.0 1036.4,519.3 1037.8,521.8 1039.2,524.6 1040.6,527.6 1042.0,530.8 1043.4,534.1 1044.8,537.7 1046.1,541.4 1047.5,545.3 1048.9,549.3 1050.3,553.4 1051.7,557.7 1053.1,562.0 1054.4,566.4 1055.8,570.9 1057.2,575.3 1058.6,579.9 1060.0,584.4 1061.4,588.8 1062.8,593.3 1064.1,597.7 1065.5,602.0 1066.9,606.3 1068.3,610.4 1069.7,614.4 1071.1,618.3 1072.5,622.0 1073.8,625.6 1075.2,628.9 1076.6,632.1 1078.0,635.1 1079.4,637.9 1080.8,640.4 1082.1,642.7 1083.5,644.7 1084.9,646.5 1086.3,648.1 1087.7,649.3 1089.1,650.3 1090.5,651.0 1091.8,651.4 1093.2,651.6 1094.6,651.4 1096.0,651.0 1097.4,650.3 1098.8,649.3 1100.2,648.1 1101.5,646.5 1102.9,644.7 1104.3,642.7 1105.7,640.4 1107.1,637.9 1108.5,635.1 1109.8,632.1 1111.2,628.9 1112.6,625.6 1114.0,622.0 1115.4,618.3 1116.8,614.4 1118.2,610.4 1119.5,606.3 1120.9,602.0 1122.3,597.7 1123.7,593.3 1125.1,588.8 1126.5,584.4 1127.9,579.8 1129.2,575.3 1130.6,570.9 1132.0,566.4 1133.4,562.0 1134.8,557.7 1136.2,553.4 1137.5,549.3 1138.9,545.3 1140.3,541.4 1141.7,537.7 1143.1,534.1 1144.5,530.8 1145.9,527.6 1147.2,524.6 1148.6,521.8 1150.0,519.3 1151.4,517.0 1152.8,515.0 1154.2,513.2 1155.6,511.6 1156.9,510.4 1158.3,509.4 1159.7,508.7 1161.1,508.3 1162.5,508.1 1163.9,508.3 1165.2,508.7 1166.6,509.4 1168.0,510.4 1169.4,511.6 1170.8,513.2 1172.2,515.0 1173.6,517.0 1174.9,519.3 1176.3,521.8 1177.7,524.6 1179.1,527.6 1180.5,530.8 1181.9,534.1 1183.3,537.7 1184.6,541.4 1186.0,545.3 1187.4,549.3 1188.8,553.4 1190.2,557.7 1191.6,562.0 1192.9,566.4 1194.3,570.9 1195.7,575.3 1197.1,579.9 1198.5,584.4 1199.9,588.8 1201.3,593.3 1202.6,597.7 1204.0,602.0 1205.4,606.3 1206.8,610.4 1208.2,614.4 1209.6,618.3 1211.0,622.0 1212.3,625.6 1213.7,628.9 1215.1,632.1 1216.5,635.1 1217.9,637.9 1219.3,640.4 1220.6,642.7 1222.0,644.7 1223.4,646.5 1224.8,648.1 1226.2,649.3 1227.6,650.3 1229.0,651.0 1230.3,651.4 1231.7,651.6 1233.1,651.4 1234.5,651.0 1235.9,650.3 1237.3,649.3 1238.7,648.1 1240.0,646.5 1241.4,644.7 1242.8,642.7 1244.2,640.4 1245.6,637.9 1247.0,635.1 1248.3,632.1 1249.7,628.9 1251.1,625.6 1252.5,622.0 1253.9,618.3 1255.3,614.4 1256.7,610.4 1258.0,606.3 1259.4,602.0 1260.8,597.7 1262.2,593.3 1263.6,588.8 1265.0,584.4 1266.4,579.8 1267.7,575.3 1269.1,570.9 1270.5,566.4 1271.9,562.0 1273.3,557.7 1274.7,553.4 1276.0,549.3 1277.4,545.3 1278.8,541.4 1280.2,537.7 1281.6,534.1 1283.0,530.8 1284.4,527.6 1285.7,524.6 1287.1,521.8 1288.5,519.3 1289.9,517.0 1291.3,515.0 1292.7,513.2 1294.1,511.6 1295.4,510.4 1296.8,509.4 1298.2,508.7 1299.6,508.3 1301.0,508.1 1302.4,508.3 1303.7,508.7 1305.1,509.4 1306.5,510.4 1307.9,511.6 1309.3,513.2 1310.7,515.0 1312.1,517.0 1313.4,519.3 1314.8,521.8 1316.2,524.6 1317.6,527.6 1319.0,530.8 1320.4,534.1 1321.8,537.7 1323.1,541.4 1324.5,545.3 1325.9,549.3 1327.3,553.4 1328.7,557.7 1330.1,562.0 1331.4,566.4 1332.8,570.9 1334.2,575.3 1335.6,579.9 1337.0,584.4 1338.4,588.8 1339.8,593.3 1341.1,597.7 1342.5,602.0 1343.9,606.3 1345.3,610.4 1346.7,614.4 1348.1,618.3 1349.5,622.0 1350.8,625.6 1352.2,628.9 1353.6,632.1 1355.0,635.1 1356.4,637.9 1357.8,640.4 1359.1,642.7 1360.5,644.7 1361.9,646.5 1363.3,648.1 1364.7,649.3 1366.1,650.3 1367.5,651.0 1368.8,651.4 1370.2,651.6 1371.6,651.4 1373.0,651.0 1374.4,650.3 1375.8,649.3 1377.2,648.1 1378.5,646.5 1379.9,644.7 1381.3,642.7 1382.7,640.4 1384.1,637.9 1385.5,635.1 1386.8,632.1 1388.2,628.9 1389.6,625.6 1391.0,622.0 1392.4,618.3 1393.8,614.4 1395.2,610.4 1396.5,606.3 1397.9,602.0 1399.3,597.7 1400.7,593.3 1402.1,588.8 1403.5,584.4 1404.9,579.8 1406.2,575.3 1407.6,570.9 1409.0,566.4 1410.4,562.0 1411.8,557.7 1413.2,553.4 1414.5,549.3 1415.9,545.3 1417.3,541.4" fill="none" stroke="#808000" stroke-width="1.0" shape-rendering="crispEdges"/><path d="M679 651h0M680 651h0M682 650h0M683 649h0M685 648h0M686 647h0M687 645h0M689 643h0M690 640h0M692 638h0M693 635h0M694 632h0M696 629h0M697 626h0M699 622h0M700 618h0M701 614h0M703 610h0M704 606h0M705 602h0M707 598h0M708 593h0M710 589h0M711 584h0M712 580h0M714 575h0M715 571h0M717 566h0M718 562h0M719 558h0M721 553h0M722 549h0M723 545h0M725 541h0M726 538h0M728 534h0M729 531h0M730 528h0M732 525h0M733 522h0M735 519h0M736 517h0M737 515h0M739 513h0M740 512h0M741 510h0M743 509h0M744 509h0M746 508h0M747 508h0M748 508h0M750 509h0M751 509h0M753 510h0M754 512h0M755 513h0M757 515h0M758 517h0M759 519h0M761 522h0M762 525h0M764 528h0M765 531h0M766 534h0M768 538h0M769 541h0M771 545h0M772 549h0M773 553h0M775 558h0M776 562h0M777 566h0M779 571h0M780 575h0M782 580h0M783 584h0M784 589h0M786 593h0M787 598h0M789 602h0M790 606h0M791 610h0M793 614h0M794 618h0M795 622h0M797 626h0M798 629h0M800 632h0M801 635h0M802 638h0M804 640h0M805 643h0M807 645h0M808 647h0M809 648h0M811 649h0M812 650h0M813 651h0M815 651h0M816 652h0M818 651h0M819 651h0M820 650h0M822 649h0M823 648h0M825 647h0M826 645h0M827 643h0M829 640h0M830 638h0M831 635h0M833 632h0M834 629h0M836 626h0M837 622h0M838 618h0M840 614h0M841 610h0M843 606h0M844 602h0M845 598h0M847 593h0M848 589h0M849 584h0M851 580h0M852 575h0M854 571h0M855 566h0M856 562h0M858 558h0M859 553h0M861 549h0M862 545h0M863 541h0M865 538h0M866 534h0M867 531h0M869 528h0M870 525h0M872 522h0M873 519h0M874 517h0M876 515h0M877 513h0M879 512h0M880 510h0M881 509h0M883 509h0M884 508h0M885 508h0M887 508h0M888 509h0M890 509h0M891 510h0M892 512h0M894 513h0M895 515h0M897 517h0M898 519h0M899 522h0M901 525h0M902 528h0M903 531h0M905 534h0M906 538h0M908 541h0M909 545h0M910 549h0M912 553h0M913 558h0M915 562h0M916 566h0M917 571h0M919 575h0M920 580h0M921 584h0M923 589h0M924 593h0M926 598h0M927 602h0M928 606h0M930 610h0M931 614h0M933 618h0M934 622h0M935 626h0M937 629h0M938 632h0M939 635h0M941 638h0M942 640h0M944 643h0M945 645h0M946 647h0M948 648h0M949 649h0M951 650h0M952 651h0M953 651h0M955 652h0M956 651h0M957 651h0M959 650h0M960 649h0M962 648h0M963 647h0M964 645h0M966 643h0M967 640h0M969 638h0M970 635h0M971 632h0M973 629h0M974 626h0M976 622h0M977 618h0M978 614h0M980 610h0M981 606h0M982 602h0M984 598h0M985 593h0M987 589h0M988 584h0M989 580h0M991 575h0M992 571h0M994 566h0M995 562h0M996 558h0M998 553h0M999 549h0M1000 545h0M1002 541h0M1003 538h0M1005 534h0M1006 531h0M1007 528h0M1009 525h0M1010 522h0M1012 519h0M1013 517h0M1014 515h0M1016 513h0M1017 512h0M1018 510h0M1020 509h0M1021 509h0M1023 508h0M1024 508h0M1025 508h0M1027 509h0M1028 509h0M1030 510h0M1031 512h0M1032 513h0M1034 515h0M1035 517h0M1036 519h0M1038 522h0M1039 525h0M1041 528h0M1042 531h0M1043 534h0M1045 538h0M1046 541h0M1048 545h0M1049 549h0M1050 553h0M1052 558h0M1053 562h0M1054 566h0M1056 571h0M1057 575h0M1059 580h0M1060 584h0M1061 589h0M1063 593h0M1064 598h0M1066 602h0M1067 606h0M1068 610h0M1070 614h0M1071 618h0M1072 622h0M1074 626h0M1075 629h0M1077 632h0M1078 635h0M1079 638h0M1081 640h0M1082 643h0M1084 645h0M1085 647h0M1086 648h0M1088 649h0M1089 650h0M1090 651h0M1092 651h0M1093 652h0M1095 651h0M1096 651h0M1097 650h0M1099 649h0M1100 648h0M1102 647h0M1103 645h0M1104 643h0M1106 640h0M1107 638h0M1108 635h0M1110 632h0M1111 629h0M1113 626h0M1114 622h0M1115 618h0M1117 614h0M1118 610h0M1120 606h0M1121 602h0M1122 598h0M1124 593h0M1125 589h0M1126 584h0M1128 580h0M1129 575h0M1131 571h0M1132 566h0M1133 562h0M1135 558h0M1136 553h0M1138 549h0M1139 545h0M1140 541h0M1142 538h0M1143 534h0M1144 531h0M1146 528h0M1147 525h0M1149 522h0M1150 519h0M1151 517h0M1153 515h0M1154 513h0M1156 512h0M1157 510h0M1158 509h0M1160 509h0M1161 508h0M1162 508h0M1164 508h0M1165 509h0M1167 509h0M1168 510h0M1169 512h0M1171 513h0M1172 515h0M1174 517h0M1175 519h0M1176 522h0M1178 525h0M1179 528h0M1180 531h0M1182 534h0M1183 538h0M1185 541h0M1186 545h0M1187 549h0M1189 553h0M1190 558h0M1192 562h0M1193 566h0M1194 571h0M1196 575h0M1197 580h0M1198 584h0M1200 589h0M1201 593h0M1203 598h0M1204 602h0M1205 606h0M1207 610h0M1208 614h0M1210 618h0M1211 622h0M1212 626h0M1214 629h0M1215 632h0M1216 635h0M1218 638h0M1219 640h0M1221 643h0M1222 645h0M1223 647h0M1225 648h0M1226 649h0M1228 650h0M1229 651h0M1230 651h0M1232 652h0M1233 651h0M1234 651h0M1236 650h0M1237 649h0M1239 648h0M1240 647h0M1241 645h0M1243 643h0M1244 640h0M1246 638h0M1247 635h0M1248 632h0M1250 629h0M1251 626h0M1253 622h0M1254 618h0M1255 614h0M1257 610h0M1258 606h0M1259 602h0M1261 598h0M1262 593h0M1264 589h0M1265 584h0M1266 580h0M1268 575h0M1269 571h0M1271 566h0M1272 562h0M1273 558h0M1275 553h0M1276 549h0M1277 545h0M1279 541h0M1280 538h0M1282 534h0M1283 531h0M1284 528h0M1286 525h0M1287 522h0M1289 519h0M1290 517h0M1291 515h0M1293 513h0M1294 512h0M1295 510h0M1297 509h0M1298 509h0M1300 508h0M1301 508h0M1302 508h0M1304 509h0M1305 509h0M1307 510h0M1308 512h0M1309 513h0M1311 515h0M1312 517h0M1313 519h0M1315 522h0M1316 525h0M1318 528h0M1319 531h0M1320 534h0M1322 538h0M1323 541h0M1325 545h0M1326 549h0M1327 553h0M1329 558h0M1330 562h0M1331 566h0M1333 571h0M1334 575h0M1336 580h0M1337 584h0M1338 589h0M1340 593h0M1341 598h0M1343 602h0M1344 606h0M1345 610h0M1347 614h0M1348 618h0M1349 622h0M1351 626h0M1352 629h0M1354 632h0M1355 635h0M1356 638h0M1358 640h0M1359 643h0M1361 645h0M1362 647h0M1363 648h0M1365 649h0M1366 650h0M1367 651h0M1369 651h0M1370 652h0M1372 651h0M1373 651h0M1374 650h0M1376 649h0M1377 648h0M1379 647h0M1380 645h0M1381 643h0M1383 640h0M1384 638h0M1385 635h0M1387 632h0M1388 629h0M1390 626h0M1391 622h0M1392 618h0M1394 614h0M1395 610h0M1397 606h0M1398 602h0M1399 598h0M1401 593h0M1402 589h0M1403 584h0M1405 580h0M1406 575h0M1408 571h0M1409 566h0M1410 562h0M1412 558h0M1413 553h0M1415 549h0M1416 545h0M1417 541h0" stroke="#808000" stroke-width="3" stroke-linecap="square" shape-rendering="crispEdges"/><polyline points="679.1,678.0 680.5,674.7 681.9,671.3 683.3,667.8 684.7,664.2 686.0,660.5 687.4,656.7 688.8,652.9 690.2,649.0 691.6,645.0 693.0,640.9 694.3,636.8 695.7,632.7 697.1,628.4 698.5,624.2 699.9,619.9 701.3,615.5 702.7,611.1 704.0,606.7 705.4,602.3 706.8,597.8 708.2,593.3 709.6,588.9 711.0,584.4 712.4,579.8 713.7,575.3 715.1,570.8 716.5,566.4 717.9,561.9 719.3,557.4 720.7,553.0 722.0,548.6 723.4,544.2 724.8,539.8 726.2,535.5 727.6,531.3 729.0,527.0 730.4,522.9 731.7,518.8 733.1,514.7 734.5,510.7 735.9,506.8 737.3,503.0 738.7,499.2 740.1,495.5 741.4,491.9 742.8,488.4 744.2,485.0 745.6,481.7 747.0,478.4 748.4,475.3 749.7,472.2 751.1,469.3 752.5,466.5 753.9,463.8 755.3,461.2 756.7,458.7 758.1,456.4 759.4,454.1 760.8,452.0 762.2,450.1 763.6,448.2 765.0,446.5 766.4,444.9 767.8,443.4 769.1,442.1 770.5,440.9 771.9,439.9 773.3,438.9 774.7,438.2 776.1,437.5 777.4,437.0 778.8,436.7 780.2,436.5 781.6,436.4 783.0,436.5 784.4,436.7 785.8,437.0 787.1,437.5 788.5,438.2 789.9,438.9 791.3,439.9 792.7,440.9 794.1,442.1 795.5,443.4 796.8,444.9 798.2,446.5 799.6,448.2 801.0,450.1 802.4,452.0 803.8,454.1 805.1,456.4 806.5,458.7 807.9,461.2 809.3,463.8 810.7,466.5 812.1,469.3 813.5,472.2 814.8,475.3 816.2,478.4 817.6,481.7 819.0,485.0 820.4,488.4 821.8,491.9 823.2,495.5 824.5,499.2 825.9,503.0 827.3,506.8 828.7,510.7 830.1,514.7 831.5,518.8 832.8,522.9 834.2,527.0 835.6,531.3 837.0,535.5 838.4,539.8 839.8,544.2 841.2,548.6 842.5,553.0 843.9,557.4 845.3,561.9 846.7,566.4 848.1,570.8 849.5,575.3 850.9,579.9 852.2,584.4 853.6,588.9 855.0,593.3 856.4,597.8 857.8,602.3 859.2,606.7 860.5,611.1 861.9,615.5 863.3,619.9 864.7,624.2 866.1,628.4 867.5,632.7 868.9,636.8 870.2,640.9 871.6,645.0 873.0,649.0 874.4,652.9 875.8,656.7 877.2,660.5 878.6,664.2 879.9,667.8 881.3,671.3 882.7,674.7 884.1,678.0 885.5,681.3 886.9,684.4 888.2,687.5 889.6,690.4 891.0,693.2 892.4,695.9 893.8,698.5 895.2,701.0 896.6,703.3 897.9,705.6 899.3,707.7 900.7,709.6 902.1,711.5 903.5,713.2 904.9,714.8 906.3,716.3 907.6,717.6 909.0,718.8 910.4,719.8 911.8,720.8 913.2,721.5 914.6,722.2 915.9,722.7 917.3,723.0 918.7,723.2 920.1,723.3 921.5,723.2 922.9,723.0 924.3,722.7 925.6,722.2 927.0,721.5 928.4,720.8 929.8,719.8 931.2,718.8 932.6,717.6 934.0,716.3 935.3,714.8 936.7,713.2 938.1,711.5 939.5,709.6 940.9,707.7 942.3,705.6 943.6,703.3 945.0,701.0 946.4,698.5 947.8,695.9 949.2,693.2 950.6,690.4 952.0,687.5 953.3,684.4 954.7,681.3 956.1,678.0 957.5,674.7 958.9,671.3 960.3,667.8 961.7,664.2 963.0,660.5 964.4,656.7 965.8,652.9 967.2,649.0 968.6,645.0 970.0,640.9 971.3,636.8 972.7,632.7 974.1,628.4 975.5,624.2 976.9,619.9 978.3,615.5 979.7,611.1 981.0,606.7 982.4,602.3 983.8,597.8 985.2,593.3 986.6,588.9 988.0,584.4 989.4,579.8 990.7,575.3 992.1,570.8 993.5,566.4 994.9,561.9 996.3,557.4 997.7,553.0 999.0,548.6 1000.4,544.2 1001.8,539.8 1003.2,535.5 1004.6,531.3 1006.0,527.0 1007.4,522.9 1008.7,518.8 1010.1,514.7 1011.5,510.7 1012.9,506.8 1014.3,503.0 1015.7,499.2 1017.1,495.5 1018.4,491.9 1019.8,488.4 1021.2,485.0 1022.6,481.7 1024.0,478.4 1025.4,475.3 1026.7,472.2 1028.1,469.3 1029.5,466.5 1030.9,463.8 1032.3,461.2 1033.7,458.7 1035.1,456.4 1036.4,454.1 1037.8,452.0 1039.2,450.1 1040.6,448.2 1042.0,446.5 1043.4,444.9 1044.8,443.4 1046.1,442.1 1047.5,440.9 1048.9,439.9 1050.3,438.9 1051.7,438.2 1053.1,437.5 1054.4,437.0 1055.8,436.7 1057.2,436.5 1058.6,436.4 1060.0,436.5 1061.4,436.7 1062.8,437.0 1064.1,437.5 1065.5,438.2 1066.9,438.9 1068.3,439.9 1069.7,440.9 1071.1,442.1 1072.5,443.4 1073.8,444.9 1075.2,446.5 1076.6,448.2 1078.0,450.1 1079.4,452.0 1080.8,454.1 1082.1,456.4 1083.5,458.7 1084.9,461.2 1086.3,463.8 1087.7,466.5 1089.1,469.3 1090.5,472.2 1091.8,475.3 1093.2,478.4 1094.6,481.7 1096.0,485.0 1097.4,488.4 1098.8,491.9 1100.2,495.5 1101.5,499.2 1102.9,503.0 1104.3,506.8 1105.7,510.7 1107.1,514.7 1108.5,518.8 1109.8,522.9 1111.2,527.0 1112.6,531.3 1114.0,535.5 1115.4,539.8 1116.8,544.2 1118.2,548.6 1119.5,553.0 1120.9,557.4 1122.3,561.9 1123.7,566.4 1125.1,570.8 1126.5,575.3 1127.9,579.9 1129.2,584.4 1130.6,588.9 1132.0,593.3 1133.4,597.8 1134.8,602.3 1136.2,606.7 1137.5,611.1 1138.9,615.5 1140.3,619.9 1141.7,624.2 1143.1,628.4 1144.5,632.7 1145.9,636.8 1147.2,640.9 1148.6,645.0 1150.0,649.0 1151.4,652.9 1152.8,656.7 1154.2,660.5 1155.6,664.2 1156.9,667.8 1158.3,671.3 1159.7,674.7 1161.1,678.0 1162.5,681.3 1163.9,684.4 1165.2,687.5 1166.6,690.4 1168.0,693.2 1169.4,695.9 1170.8,698.5 1172.2,701.0 1173.6,703.3 1174.9,705.6 1176.3,707.7 1177.7,709.6 1179.1,711.5 1180.5,713.2 1181.9,714.8 1183.3,716.3 1184.6,717.6 1186.0,718.8 1187.4,719.8 1188.8,720.8 1190.2,721.5 1191.6,722.2 1192.9,722.7 1194.3,723.0 1195.7,723.2 1197.1,723.3 1198.5,723.2 1199.9,723.0 1201.3,722.7 1202.6,722.2 1204.0,721.5 1205.4,720.8 1206.8,719.8 1208.2,718.8 1209.6,717.6 1211.0,716.3 1212.3,714.8 1213.7,713.2 1215.1,711.5 1216.5,709.6 1217.9,707.7 1219.3,705.6 1220.6,703.3 1222.0,701.0 1223.4,698.5 1224.8,695.9 1226.2,693.2 1227.6,690.4 1229.0,687.5 1230.3,684.4 1231.7,681.3 1233.1,678.0 1234.5,674.7 1235.9,671.3 1237.3,667.8 1238.7,664.2 1240.0,660.5 1241.4,656.7 1242.8,652.9 1244.2,649.0 1245.6,645.0 1247.0,640.9 1248.3,636.8 1249.7,632.7 1251.1,628.4 1252.5,624.2 1253.9,619.9 1255.3,615.5 1256.7,611.1 1258.0,606.7 1259.4,602.3 1260.8,597.8 1262.2,593.3 1263.6,588.9 1265.0,584.4 1266.4,579.8 1267.7,575.3 1269.1,570.8 1270.5,566.4 1271.9,561.9 1273.3,557.4 1274.7,553.0 1276.0,548.6 1277.4,544.2 1278.8,539.8 1280.2,535.5 1281.6,531.3 1283.0,527.0 1284.4,522.9 1285.7,518.8 1287.1,514.7 1288.5,510.7 1289.9,506.8 1291.3,503.0 1292.7,499.2 1294.1,495.5 1295.4,491.9 1296.8,488.4 1298.2,485.0 1299.6,481.7 1301.0,478.4 1302.4,475.3 1303.7,472.2 1305.1,469.3 1306.5,466.5 1307.9,463.8 1309.3,461.2 1310.7,458.7 1312.1,456.4 1313.4,454.1 1314.8,452.0 1316.2,450.1 1317.6,448.2 1319.0,446.5 1320.4,444.9 1321.8,443.4 1323.1,442.1 1324.5,440.9 1325.9,439.9 1327.3,438.9 1328.7,438.2 1330.1,437.5 1331.4,437.0 1332.8,436.7 1334.2,436.5 1335.6,436.4 1337.0,436.5 1338.4,436.7 1339.8,437.0 1341.1,437.5 1342.5,438.2 1343.9,438.9 1345.3,439.9 1346.7,440.9 1348.1,442.1 1349.5,443.4 1350.8,444.9 1352.2,446.5 1353.6,448.2 1355.0,450.1 1356.4,452.0 1357.8,454.1 1359.1,456.4 1360.5,458.7 1361.9,461.2 1363.3,463.8 1364.7,466.5 1366.1,469.3 1367.5,472.2 1368.8,475.3 1370.2,478.4 1371.6,481.7 1373.0,485.0 1374.4,488.4 1375.8,491.9 1377.2,495.5 1378.5,499.2 1379.9,503.0 1381.3,506.8 1382.7,510.7 1384.1,514.7 1385.5,518.8 1386.8,522.9 1388.2,527.0 1389.6,531.3 1391.0,535.5 1392.4,539.8 1393.8,544.2 1395.2,548.6 1396.5,553.0 1397.9,557.4 1399.3,561.9 1400.7,566.4 1402.1,570.8 1403.5,575.3 1404.9,579.9 1406.2,584.4 1407.6,588.9 1409.0,593.3 1410.4,597.8 1411.8,602.3 1413.2,606.7 1414.5,611.1 1415.9,615.5 1417.3,619.9" fill="none" stroke="#ff0000" stroke-width="1.0" shape-rendering="crispEdges"/><path d="M679 678h0M680 675h0M682 671h0M683 668h0M685 664h0M686 660h0M687 657h0M689 653h0M690 649h0M692 645h0M693 641h0M694 637h0M696 633h0M697 628h0M699 624h0M700 620h0M701 616h0M703 611h0M704 607h0M705 602h0M707 598h0M708 593h0M710 589h0M711 584h0M712 580h0M714 575h0M715 571h0M717 566h0M718 562h0M719 557h0M721 553h0M722 549h0M723 544h0M725 540h0M726 536h0M728 531h0M729 527h0M730 523h0M732 519h0M733 515h0M735 511h0M736 507h0M737 503h0M739 499h0M740 496h0M741 492h0M743 488h0M744 485h0M746 482h0M747 478h0M748 475h0M750 472h0M751 469h0M753 467h0M754 464h0M755 461h0M757 459h0M758 456h0M759 454h0M761 452h0M762 450h0M764 448h0M765 446h0M766 445h0M768 443h0M769 442h0M771 441h0M772 440h0M773 439h0M775 438h0M776 438h0M777 437h0M779 437h0M780 436h0M782 436h0M783 436h0M784 437h0M786 437h0M787 438h0M789 438h0M790 439h0M791 440h0M793 441h0M794 442h0M795 443h0M797 445h0M798 446h0M800 448h0M801 450h0M802 452h0M804 454h0M805 456h0M807 459h0M808 461h0M809 464h0M811 467h0M812 469h0M813 472h0M815 475h0M816 478h0M818 482h0M819 485h0M820 488h0M822 492h0M823 496h0M825 499h0M826 503h0M827 507h0M829 511h0M830 515h0M831 519h0M833 523h0M834 527h0M836 531h0M837 536h0M838 540h0M840 544h0M841 549h0M843 553h0M844 557h0M845 562h0M847 566h0M848 571h0M849 575h0M851 580h0M852 584h0M854 589h0M855 593h0M856 598h0M858 602h0M859 607h0M861 611h0M862 616h0M863 620h0M865 624h0M866 628h0M867 633h0M869 637h0M870 641h0M872 645h0M873 649h0M874 653h0M876 657h0M877 660h0M879 664h0M880 668h0M881 671h0M883 675h0M884 678h0M885 681h0M887 684h0M888 687h0M890 690h0M891 693h0M892 696h0M894 698h0M895 701h0M897 703h0M898 706h0M899 708h0M901 710h0M902 712h0M903 713h0M905 715h0M906 716h0M908 718h0M909 719h0M910 720h0M912 721h0M913 722h0M915 722h0M916 723h0M917 723h0M919 723h0M920 723h0M921 723h0M923 723h0M924 723h0M926 722h0M927 722h0M928 721h0M930 720h0M931 719h0M933 718h0M934 716h0M935 715h0M937 713h0M938 712h0M939 710h0M941 708h0M942 706h0M944 703h0M945 701h0M946 698h0M948 696h0M949 693h0M951 690h0M952 687h0M953 684h0M955 681h0M956 678h0M957 675h0M959 671h0M960 668h0M962 664h0M963 660h0M964 657h0M966 653h0M967 649h0M969 645h0M970 641h0M971 637h0M973 633h0M974 628h0M976 624h0M977 620h0M978 616h0M980 611h0M981 607h0M982 602h0M984 598h0M985 593h0M987 589h0M988 584h0M989 580h0M991 575h0M992 571h0M994 566h0M995 562h0M996 557h0M998 553h0M999 549h0M1000 544h0M1002 540h0M1003 536h0M1005 531h0M1006 527h0M1007 523h0M1009 519h0M1010 515h0M1012 511h0M1013 507h0M1014 503h0M1016 499h0M1017 496h0M1018 492h0M1020 488h0M1021 485h0M1023 482h0M1024 478h0M1025 475h0M1027 472h0M1028 469h0M1030 467h0M1031 464h0M1032 461h0M1034 459h0M1035 456h0M1036 454h0M1038 452h0M1039 450h0M1041 448h0M1042 446h0M1043 445h0M1045 443h0M1046 442h0M1048 441h0M1049 440h0M1050 439h0M1052 438h0M1053 438h0M1054 437h0M1056 437h0M1057 436h0M1059 436h0M1060 436h0M1061 437h0M1063 437h0M1064 438h0M1066 438h0M1067 439h0M1068 440h0M1070 441h0M1071 442h0M1072 443h0M1074 445h0M1075 446h0M1077 448h0M1078 450h0M1079 452h0M1081 454h0M1082 456h0M1084 459h0M1085 461h0M1086 464h0M1088 467h0M1089 469h0M1090 472h0M1092 475h0M1093 478h0M1095 482h0M1096 485h0M1097 488h0M1099 492h0M1100 496h0M1102 499h0M1103 503h0M1104 507h0M1106 511h0M1107 515h0M1108 519h0M1110 523h0M1111 527h0M1113 531h0M1114 536h0M1115 540h0M1117 544h0M1118 549h0M1120 553h0M1121 557h0M1122 562h0M1124 566h0M1125 571h0M1126 575h0M1128 580h0M1129 584h0M1131 589h0M1132 593h0M1133 598h0M1135 602h0M1136 607h0M1138 611h0M1139 616h0M1140 620h0M1142 624h0M1143 628h0M1144 633h0M1146 637h0M1147 641h0M1149 645h0M1150 649h0M1151 653h0M1153 657h0M1154 660h0M1156 664h0M1157 668h0M1158 671h0M1160 675h0M1161 678h0M1162 681h0M1164 684h0M1165 687h0M1167 690h0M1168 693h0M1169 696h0M1171 698h0M1172 701h0M1174 703h0M1175 706h0M1176 708h0M1178 710h0M1179 712h0M1180 713h0M1182 715h0M1183 716h0M1185 718h0M1186 719h0M1187 720h0M1189 721h0M1190 722h0M1192 722h0M1193 723h0M1194 723h0M1196 723h0M1197 723h0M1198 723h0M1200 723h0M1201 723h0M1203 722h0M1204 722h0M1205 721h0M1207 720h0M1208 719h0M1210 718h0M1211 716h0M1212 715h0M1214 713h0M1215 712h0M1216 710h0M1218 708h0M1219 706h0M1221 703h0M1222 701h0M1223 698h0M1225 696h0M1226 693h0M1228 690h0M1229 687h0M1230 684h0M1232 681h0M1233 678h0M1234 675h0M1236 671h0M1237 668h0M1239 664h0M1240 660h0M1241 657h0M1243 653h0M1244 649h0M1246 645h0M1247 641h0M1248 637h0M1250 633h0M1251 628h0M1253 624h0M1254 620h0M1255 616h0M1257 611h0M1258 607h0M1259 602h0M1261 598h0M1262 593h0M1264 589h0M1265 584h0M1266 580h0M1268 575h0M1269 571h0M1271 566h0M1272 562h0M1273 557h0M1275 553h0M1276 549h0M1277 544h0M1279 540h0M1280 536h0M1282 531h0M1283 527h0M1284 523h0M1286 519h0M1287 515h0M1289 511h0M1290 507h0M1291 503h0M1293 499h0M1294 496h0M1295 492h0M1297 488h0M1298 485h0M1300 482h0M1301 478h0M1302 475h0M1304 472h0M1305 469h0M1307 467h0M1308 464h0M1309 461h0M1311 459h0M1312 456h0M1313 454h0M1315 452h0M1316 450h0M1318 448h0M1319 446h0M1320 445h0M1322 443h0M1323 442h0M1325 441h0M1326 440h0M1327 439h0M1329 438h0M1330 438h0M1331 437h0M1333 437h0M1334 436h0M1336 436h0M1337 436h0M1338 437h0M1340 437h0M1341 438h0M1343 438h0M1344 439h0M1345 440h0M1347 441h0M1348 442h0M1349 443h0M1351 445h0M1352 446h0M1354 448h0M1355 450h0M1356 452h0M1358 454h0M1359 456h0M1361 459h0M1362 461h0M1363 464h0M1365 467h0M1366 469h0M1367 472h0M1369 475h0M1370 478h0M1372 482h0M1373 485h0M1374 488h0M1376 492h0M1377 496h0M1379 499h0M1380 503h0M1381 507h0M1383 511h0M1384 515h0M1385 519h0M1387 523h0M1388 527h0M1390 531h0M1391 536h0M1392 540h0M1394 544h0M1395 549h0M1397 553h0M1398 557h0M1399 562h0M1401 566h0M1402 571h0M1403 575h0M1405 580h0M1406 584h0M1408 589h0M1409 593h0M1410 598h0M1412 602h0M1413 607h0M1415 611h0M1416 616h0M1417 620h0" stroke="#ff0000" stroke-width="3" stroke-linecap="square" shape-rendering="crispEdges"/><polyline points="679.1,668.3 680.5,674.8 681.9,680.4 683.3,685.2 684.7,689.0 686.0,691.8 687.4,693.7 688.8,694.6 690.2,694.4 691.6,693.2 693.0,691.0 694.3,687.8 695.7,683.7 697.1,678.6 698.5,672.7 699.9,665.9 701.3,658.4 702.7,650.2 704.0,641.3 705.4,631.9 706.8,622.1 708.2,611.9 709.6,601.4 711.0,590.6 712.4,579.8 713.7,569.1 715.1,558.3 716.5,547.8 717.9,537.6 719.3,527.8 720.7,518.4 722.0,509.5 723.4,501.3 724.8,493.8 726.2,487.0 727.6,481.1 729.0,476.0 730.4,471.9 731.7,468.7 733.1,466.5 734.5,465.3 735.9,465.1 737.3,466.0 738.7,467.9 740.1,470.7 741.4,474.5 742.8,479.3 744.2,484.9 745.6,491.4 747.0,498.7 748.4,506.7 749.7,515.3 751.1,524.6 752.5,534.3 753.9,544.4 755.3,554.8 756.7,565.5 758.1,576.2 759.4,587.1 760.8,597.8 762.2,608.4 763.6,618.7 765.0,628.7 766.4,638.3 767.8,647.3 769.1,655.7 770.5,663.5 771.9,670.5 773.3,676.7 774.7,682.1 776.1,686.6 777.4,690.1 778.8,692.6 780.2,694.1 781.6,694.6 783.0,694.1 784.4,692.6 785.8,690.1 787.1,686.6 788.5,682.1 789.9,676.7 791.3,670.5 792.7,663.5 794.1,655.7 795.5,647.3 796.8,638.3 798.2,628.7 799.6,618.7 801.0,608.4 802.4,597.8 803.8,587.1 805.1,576.2 806.5,565.5 807.9,554.8 809.3,544.4 810.7,534.3 812.1,524.6 813.5,515.3 814.8,506.7 816.2,498.7 817.6,491.4 819.0,484.9 820.4,479.3 821.8,474.5 823.2,470.7 824.5,467.9 825.9,466.0 827.3,465.1 828.7,465.3 830.1,466.5 831.5,468.7 832.8,471.9 834.2,476.0 835.6,481.1 837.0,487.0 838.4,493.8 839.8,501.3 841.2,509.5 842.5,518.4 843.9,527.8 845.3,537.6 846.7,547.8 848.1,558.3 849.5,569.1 850.9,579.9 852.2,590.6 853.6,601.4 855.0,611.9 856.4,622.1 857.8,631.9 859.2,641.3 860.5,650.2 861.9,658.4 863.3,665.9 864.7,672.7 866.1,678.6 867.5,683.7 868.9,687.8 870.2,691.0 871.6,693.2 873.0,694.4 874.4,694.6 875.8,693.7 877.2,691.8 878.6,689.0 879.9,685.2 881.3,680.4 882.7,674.8 884.1,668.3 885.5,661.0 886.9,653.0 888.2,644.4 889.6,635.1 891.0,625.4 892.4,615.3 893.8,604.9 895.2,594.2 896.6,583.5 897.9,572.6 899.3,561.9 900.7,551.3 902.1,541.0 903.5,531.0 904.9,521.4 906.3,512.4 907.6,504.0 909.0,496.2 910.4,489.2 911.8,483.0 913.2,477.6 914.6,473.1 915.9,469.6 917.3,467.1 918.7,465.6 920.1,465.1 921.5,465.6 922.9,467.1 924.3,469.6 925.6,473.1 927.0,477.6 928.4,483.0 929.8,489.2 931.2,496.2 932.6,504.0 934.0,512.4 935.3,521.4 936.7,531.0 938.1,541.0 939.5,551.3 940.9,561.9 942.3,572.6 943.6,583.5 945.0,594.2 946.4,604.9 947.8,615.3 949.2,625.4 950.6,635.1 952.0,644.4 953.3,653.0 954.7,661.0 956.1,668.3 957.5,674.8 958.9,680.4 960.3,685.2 961.7,689.0 963.0,691.8 964.4,693.7 965.8,694.6 967.2,694.4 968.6,693.2 970.0,691.0 971.3,687.8 972.7,683.7 974.1,678.6 975.5,672.7 976.9,665.9 978.3,658.4 979.7,650.2 981.0,641.3 982.4,631.9 983.8,622.1 985.2,611.9 986.6,601.4 988.0,590.6 989.4,579.8 990.7,569.1 992.1,558.3 993.5,547.8 994.9,537.6 996.3,527.8 997.7,518.4 999.0,509.5 1000.4,501.3 1001.8,493.8 1003.2,487.0 1004.6,481.1 1006.0,476.0 1007.4,471.9 1008.7,468.7 1010.1,466.5 1011.5,465.3 1012.9,465.1 1014.3,466.0 1015.7,467.9 1017.1,470.7 1018.4,474.5 1019.8,479.3 1021.2,484.9 1022.6,491.4 1024.0,498.7 1025.4,506.7 1026.7,515.3 1028.1,524.6 1029.5,534.3 1030.9,544.4 1032.3,554.8 1033.7,565.5 1035.1,576.2 1036.4,587.1 1037.8,597.8 1039.2,608.4 1040.6,618.7 1042.0,628.7 1043.4,638.3 1044.8,647.3 1046.1,655.7 1047.5,663.5 1048.9,670.5 1050.3,676.7 1051.7,682.1 1053.1,686.6 1054.4,690.1 1055.8,692.6 1057.2,694.1 1058.6,694.6 1060.0,694.1 1061.4,692.6 1062.8,690.1 1064.1,686.6 1065.5,682.1 1066.9,676.7 1068.3,670.5 1069.7,663.5 1071.1,655.7 1072.5,647.3 1073.8,638.3 1075.2,628.7 1076.6,618.7 1078.0,608.4 1079.4,597.8 1080.8,587.1 1082.1,576.2 1083.5,565.5 1084.9,554.8 1086.3,544.4 1087.7,534.3 1089.1,524.6 1090.5,515.3 1091.8,506.7 1093.2,498.7 1094.6,491.4 1096.0,484.9 1097.4,479.3 1098.8,474.5 1100.2,470.7 1101.5,467.9 1102.9,466.0 1104.3,465.1 1105.7,465.3 1107.1,466.5 1108.5,468.7 1109.8,471.9 1111.2,476.0 1112.6,481.1 1114.0,487.0 1115.4,493.8 1116.8,501.3 1118.2,509.5 1119.5,518.4 1120.9,527.8 1122.3,537.6 1123.7,547.8 1125.1,558.3 1126.5,569.1 1127.9,579.9 1129.2,590.6 1130.6,601.4 1132.0,611.9 1133.4,622.1 1134.8,631.9 1136.2,641.3 1137.5,650.2 1138.9,658.4 1140.3,665.9 1141.7,672.7 1143.1,678.6 1144.5,683.7 1145.9,687.8 1147.2,691.0 1148.6,693.2 1150.0,694.4 1151.4,694.6 1152.8,693.7 1154.2,691.8 1155.6,689.0 1156.9,685.2 1158.3,680.4 1159.7,674.8 1161.1,668.3 1162.5,661.0 1163.9,653.0 1165.2,644.4 1166.6,635.1 1168.0,625.4 1169.4,615.3 1170.8,604.9 1172.2,594.2 1173.6,583.5 1174.9,572.6 1176.3,561.9 1177.7,551.3 1179.1,541.0 1180.5,531.0 1181.9,521.4 1183.3,512.4 1184.6,504.0 1186.0,496.2 1187.4,489.2 1188.8,483.0 1190.2,477.6 1191.6,473.1 1192.9,469.6 1194.3,467.1 1195.7,465.6 1197.1,465.1 1198.5,465.6 1199.9,467.1 1201.3,469.6 1202.6,473.1 1204.0,477.6 1205.4,483.0 1206.8,489.2 1208.2,496.2 1209.6,504.0 1211.0,512.4 1212.3,521.4 1213.7,531.0 1215.1,541.0 1216.5,551.3 1217.9,561.9 1219.3,572.6 1220.6,583.5 1222.0,594.2 1223.4,604.9 1224.8,615.3 1226.2,625.4 1227.6,635.1 1229.0,644.4 1230.3,653.0 1231.7,661.0 1233.1,668.3 1234.5,674.8 1235.9,680.4 1237.3,685.2 1238.7,689.0 1240.0,691.8 1241.4,693.7 1242.8,694.6 1244.2,694.4 1245.6,693.2 1247.0,691.0 1248.3,687.8 1249.7,683.7 1251.1,678.6 1252.5,672.7 1253.9,665.9 1255.3,658.4 1256.7,650.2 1258.0,641.3 1259.4,631.9 1260.8,622.1 1262.2,611.9 1263.6,601.4 1265.0,590.6 1266.4,579.8 1267.7,569.1 1269.1,558.3 1270.5,547.8 1271.9,537.6 1273.3,527.8 1274.7,518.4 1276.0,509.5 1277.4,501.3 1278.8,493.8 1280.2,487.0 1281.6,481.1 1283.0,476.0 1284.4,471.9 1285.7,468.7 1287.1,466.5 1288.5,465.3 1289.9,465.1 1291.3,466.0 1292.7,467.9 1294.1,470.7 1295.4,474.5 1296.8,479.3 1298.2,484.9 1299.6,491.4 1301.0,498.7 1302.4,506.7 1303.7,515.3 1305.1,524.6 1306.5,534.3 1307.9,544.4 1309.3,554.8 1310.7,565.5 1312.1,576.2 1313.4,587.1 1314.8,597.8 1316.2,608.4 1317.6,618.7 1319.0,628.7 1320.4,638.3 1321.8,647.3 1323.1,655.7 1324.5,663.5 1325.9,670.5 1327.3,676.7 1328.7,682.1 1330.1,686.6 1331.4,690.1 1332.8,692.6 1334.2,694.1 1335.6,694.6 1337.0,694.1 1338.4,692.6 1339.8,690.1 1341.1,686.6 1342.5,682.1 1343.9,676.7 1345.3,670.5 1346.7,663.5 1348.1,655.7 1349.5,647.3 1350.8,638.3 1352.2,628.7 1353.6,618.7 1355.0,608.4 1356.4,597.8 1357.8,587.1 1359.1,576.2 1360.5,565.5 1361.9,554.8 1363.3,544.4 1364.7,534.3 1366.1,524.6 1367.5,515.3 1368.8,506.7 1370.2,498.7 1371.6,491.4 1373.0,484.9 1374.4,479.3 1375.8,474.5 1377.2,470.7 1378.5,467.9 1379.9,466.0 1381.3,465.1 1382.7,465.3 1384.1,466.5 1385.5,468.7 1386.8,471.9 1388.2,476.0 1389.6,481.1 1391.0,487.0 1392.4,493.8 1393.8,501.3 1395.2,509.5 1396.5,518.4 1397.9,527.8 1399.3,537.6 1400.7,547.8 1402.1,558.3 1403.5,569.1 1404.9,579.9 1406.2,590.6 1407.6,601.4 1409.0,611.9 1410.4,622.1 1411.8,631.9 1413.2,641.3 1414.5,650.2 1415.9,658.4 1417.3,665.9" fill="none" stroke="#00ff00" stroke-width="1.0" shape-rendering="crispEdges"/><path d="M679 668h0M680 675h0M682 680h0M683 685h0M685 689h0M686 692h0M687 694h0M689 695h0M690 694h0M692 693h0M693 691h0M694 688h0M696 684h0M697 679h0M699 673h0M700 666h0M701 658h0M703 650h0M704 641h0M705 632h0M707 622h0M708 612h0M710 601h0M711 591h0M712 580h0M714 569h0M715 558h0M717 548h0M718 538h0M719 528h0M721 518h0M722 510h0M723 501h0M725 494h0M726 487h0M728 481h0M729 476h0M730 472h0M732 469h0M733 467h0M735 465h0M736 465h0M737 466h0M739 468h0M740 471h0M741 475h0M743 479h0M744 485h0M746 491h0M747 499h0M748 507h0M750 515h0M751 525h0M753 534h0M754 544h0M755 555h0M757 565h0M758 576h0M759 587h0M761 598h0M762 608h0M764 619h0M765 629h0M766 638h0M768 647h0M769 656h0M771 664h0M772 671h0M773 677h0M775 682h0M776 687h0M777 690h0M779 693h0M780 694h0M782 695h0M783 694h0M784 693h0M786 690h0M787 687h0M789 682h0M790 677h0M791 671h0M793 664h0M794 656h0M795 647h0M797 638h0M798 629h0M800 619h0M801 608h0M802 598h0M804 587h0M805 576h0M807 565h0M808 555h0M809 544h0M811 534h0M812 525h0M813 515h0M815 507h0M816 499h0M818 491h0M819 485h0M820 479h0M822 475h0M823 471h0M825 468h0M826 466h0M827 465h0M829 465h0M830 467h0M831 469h0M833 472h0M834 476h0M836 481h0M837 487h0M838 494h0M840 501h0M841 510h0M843 518h0M844 528h0M845 538h0M847 548h0M848 558h0M849 569h0M851 580h0M852 591h0M854 601h0M855 612h0M856 622h0M858 632h0M859 641h0M861 650h0M862 658h0M863 666h0M865 673h0M866 679h0M867 684h0M869 688h0M870 691h0M872 693h0M873 694h0M874 695h0M876 694h0M877 692h0M879 689h0M880 685h0M881 680h0M883 675h0M884 668h0M885 661h0M887 653h0M888 644h0M890 635h0M891 625h0M892 615h0M894 605h0M895 594h0M897 583h0M898 573h0M899 562h0M901 551h0M902 541h0M903 531h0M905 521h0M906 512h0M908 504h0M909 496h0M910 489h0M912 483h0M913 478h0M915 473h0M916 470h0M917 467h0M919 466h0M920 465h0M921 466h0M923 467h0M924 470h0M926 473h0M927 478h0M928 483h0M930 489h0M931 496h0M933 504h0M934 512h0M935 521h0M937 531h0M938 541h0M939 551h0M941 562h0M942 573h0M944 583h0M945 594h0M946 605h0M948 615h0M949 625h0M951 635h0M952 644h0M953 653h0M955 661h0M956 668h0M957 675h0M959 680h0M960 685h0M962 689h0M963 692h0M964 694h0M966 695h0M967 694h0M969 693h0M970 691h0M971 688h0M973 684h0M974 679h0M976 673h0M977 666h0M978 658h0M980 650h0M981 641h0M982 632h0M984 622h0M985 612h0M987 601h0M988 591h0M989 580h0M991 569h0M992 558h0M994 548h0M995 538h0M996 528h0M998 518h0M999 510h0M1000 501h0M1002 494h0M1003 487h0M1005 481h0M1006 476h0M1007 472h0M1009 469h0M1010 467h0M1012 465h0M1013 465h0M1014 466h0M1016 468h0M1017 471h0M1018 475h0M1020 479h0M1021 485h0M1023 491h0M1024 499h0M1025 507h0M1027 515h0M1028 525h0M1030 534h0M1031 544h0M1032 555h0M1034 565h0M1035 576h0M1036 587h0M1038 598h0M1039 608h0M1041 619h0M1042 629h0M1043 638h0M1045 647h0M1046 656h0M1048 664h0M1049 671h0M1050 677h0M1052 682h0M1053 687h0M1054 690h0M1056 693h0M1057 694h0M1059 695h0M1060 694h0M1061 693h0M1063 690h0M1064 687h0M1066 682h0M1067 677h0M1068 671h0M1070 664h0M1071 656h0M1072 647h0M1074 638h0M1075 629h0M1077 619h0M1078 608h0M1079 598h0M1081 587h0M1082 576h0M1084 565h0M1085 555h0M1086 544h0M1088 534h0M1089 525h0M1090 515h0M1092 507h0M1093 499h0M1095 491h0M1096 485h0M1097 479h0M1099 475h0M1100 471h0M1102 468h0M1103 466h0M1104 465h0M1106 465h0M1107 467h0M1108 469h0M1110 472h0M1111 476h0M1113 481h0M1114 487h0M1115 494h0M1117 501h0M1118 510h0M1120 518h0M1121 528h0M1122 538h0M1124 548h0M1125 558h0M1126 569h0M1128 580h0M1129 591h0M1131 601h0M1132 612h0M1133 622h0M1135 632h0M1136 641h0M1138 650h0M1139 658h0M1140 666h0M1142 673h0M1143 679h0M1144 684h0M1146 688h0M1147 691h0M1149 693h0M1150 694h0M1151 695h0M1153 694h0M1154 692h0M1156 689h0M1157 685h0M1158 680h0M1160 675h0M1161 668h0M1162 661h0M1164 653h0M1165 644h0M1167 635h0M1168 625h0M1169 615h0M1171 605h0M1172 594h0M1174 583h0M1175 573h0M1176 562h0M1178 551h0M1179 541h0M1180 531h0M1182 521h0M1183 512h0M1185 504h0M1186 496h0M1187 489h0M1189 483h0M1190 478h0M1192 473h0M1193 470h0M1194 467h0M1196 466h0M1197 465h0M1198 466h0M1200 467h0M1201 470h0M1203 473h0M1204 478h0M1205 483h0M1207 489h0M1208 496h0M1210 504h0M1211 512h0M1212 521h0M1214 531h0M1215 541h0M1216 551h0M1218 562h0M1219 573h0M1221 583h0M1222 594h0M1223 605h0M1225 615h0M1226 625h0M1228 635h0M1229 644h0M1230 653h0M1232 661h0M1233 668h0M1234 675h0M1236 680h0M1237 685h0M1239 689h0M1240 692h0M1241 694h0M1243 695h0M1244 694h0M1246 693h0M1247 691h0M1248 688h0M1250 684h0M1251 679h0M1253 673h0M1254 666h0M1255 658h0M1257 650h0M1258 641h0M1259 632h0M1261 622h0M1262 612h0M1264 601h0M1265 591h0M1266 580h0M1268 569h0M1269 558h0M1271 548h0M1272 538h0M1273 528h0M1275 518h0M1276 510h0M1277 501h0M1279 494h0M1280 487h0M1282 481h0M1283 476h0M1284 472h0M1286 469h0M1287 467h0M1289 465h0M1290 465h0M1291 466h0M1293 468h0M1294 471h0M1295 475h0M1297 479h0M1298 485h0M1300 491h0M1301 499h0M1302 507h0M1304 515h0M1305 525h0M1307 534h0M1308 544h0M1309 555h0M1311 565h0M1312 576h0M1313 587h0M1315 598h0M1316 608h0M1318 619h0M1319 629h0M1320 638h0M1322 647h0M1323 656h0M1325 664h0M1326 671h0M1327 677h0M1329 682h0M1330 687h0M1331 690h0M1333 693h0M1334 694h0M1336 695h0M1337 694h0M1338 693h0M1340 690h0M1341 687h0M1343 682h0M1344 677h0M1345 671h0M1347 664h0M1348 656h0M1349 647h0M1351 638h0M1352 629h0M1354 619h0M1355 608h0M1356 598h0M1358 587h0M1359 576h0M1361 565h0M1362 555h0M1363 544h0M1365 534h0M1366 525h0M1367 515h0M1369 507h0M1370 499h0M1372 491h0M1373 485h0M1374 479h0M1376 475h0M1377 471h0M1379 468h0M1380 466h0M1381 465h0M1383 465h0M1384 467h0M1385 469h0M1387 472h0M1388 476h0M1390 481h0M1391 487h0M1392 494h0M1394 501h0M1395 510h0M1397 518h0M1398 528h0M1399 538h0M1401 548h0M1402 558h0M1403 569h0M1405 580h0M1406 591h0M1408 601h0M1409 612h0M1410 622h0M1412 632h0M1413 641h0M1415 650h0M1416 658h0M1417 666h0" stroke="#00ff00" stroke-width="3" stroke-linecap="square" shape-rendering="crispEdges"/><path d="M606.5 436 V724 M599.5 723.5 H607.0 M602.5 708.5 H607.0 M602.5 694.5 H607.0 M602.5 680.5 H607.0 M602.5 665.5 H607.0 M599.5 651.5 H607.0 M602.5 637.5 H607.0 M602.5 622.5 H607.0 M602.5 608.5 H607.0 M602.5 594.5 H607.0 M599.5 579.5 H607.0 M602.5 565.5 H607.0 M602.5 551.5 H607.0 M602.5 536.5 H607.0 M602.5 522.5 H607.0 M599.5 508.5 H607.0 M602.5 493.5 H607.0 M602.5 479.5 H607.0 M602.5 465.5 H607.0 M602.5 450.5 H607.0 M599.5 436.5 H607.0 M615 732.5 H1447 M615.5 732.5 V740.5 M643.5 732.5 V737.5 M670.5 732.5 V737.5 M698.5 732.5 V737.5 M726.5 732.5 V737.5 M753.5 732.5 V740.5 M781.5 732.5 V737.5 M809.5 732.5 V737.5 M837.5 732.5 V737.5 M864.5 732.5 V737.5 M892.5 732.5 V740.5 M920.5 732.5 V737.5 M947.5 732.5 V737.5 M975.5 732.5 V737.5 M1003.5 732.5 V737.5 M1030.5 732.5 V740.5 M1058.5 732.5 V737.5 M1086.5 732.5 V737.5 M1114.5 732.5 V737.5 M1141.5 732.5 V737.5 M1169.5 732.5 V740.5 M1197.5 732.5 V737.5 M1224.5 732.5 V737.5 M1252.5 732.5 V737.5 M1280.5 732.5 V737.5 M1307.5 732.5 V740.5 M1335.5 732.5 V737.5 M1363.5 732.5 V737.5 M1391.5 732.5 V737.5 M1418.5 732.5 V737.5 M1446.5 732.5 V740.5" stroke="#000" stroke-width="1" fill="none"/></svg>
<div class="a t" style="left:575.65px;top:431.4px;font-size:11px;line-height:11px;font-family:'Liberation Sans';color:#000;">100</div>
<div class="a t" style="left:581.76px;top:503.125px;font-size:11px;line-height:11px;font-family:'Liberation Sans';color:#000;">50</div>
<div class="a t" style="left:587.88px;top:574.85px;font-size:11px;line-height:11px;font-family:'Liberation Sans';color:#000;">0</div>
<div class="a t" style="left:575.34px;top:646.575px;font-size:11px;line-height:11px;font-family:'Liberation Sans';color:#000;">−50</div>
<div class="a t" style="left:569.22px;top:718.3000000000001px;font-size:11px;line-height:11px;font-family:'Liberation Sans';color:#000;">−100</div>
<div class="a t" style="left:606.22px;top:745px;font-size:11px;line-height:11px;font-family:'Liberation Sans';color:#000;">225</div>
<div class="a t" style="left:744.72px;top:745px;font-size:11px;line-height:11px;font-family:'Liberation Sans';color:#000;">230</div>
<div class="a t" style="left:883.22px;top:745px;font-size:11px;line-height:11px;font-family:'Liberation Sans';color:#000;">235</div>
<div class="a t" style="left:1021.72px;top:745px;font-size:11px;line-height:11px;font-family:'Liberation Sans';color:#000;">240</div>
<div class="a t" style="left:1160.22px;top:745px;font-size:11px;line-height:11px;font-family:'Liberation Sans';color:#000;">245</div>
<div class="a t" style="left:1298.72px;top:745px;font-size:11px;line-height:11px;font-family:'Liberation Sans';color:#000;">250</div>
<div class="a t" style="left:1437.22px;top:745px;font-size:11px;line-height:11px;font-family:'Liberation Sans';color:#000;">255</div>
<div class="a" style="left:76px;top:802px;width:929px;height:453px;background:#ececec;border-radius:6px 6px 0 0;overflow:hidden"><div class="a" style="left:0;top:0;width:929px;height:22px;background:linear-gradient(#f4f4f4 0px,#f4f4f4 1px,#ececec 2px,#e3e3e3 12px,#d8d8d8 21px)"></div></div>
<svg class="a" style="left:83px;top:805px" width="16" height="16"><circle cx="8" cy="8" r="6.5" fill="url(#tlgi)" stroke="#808080" stroke-width="1"/><ellipse cx="8" cy="3.8" rx="2" ry="0.9" fill="#fff" opacity="0.7"/></svg>
<svg class="a" style="left:104px;top:805px" width="16" height="16"><circle cx="8" cy="8" r="6.5" fill="url(#tlgi)" stroke="#808080" stroke-width="1"/><ellipse cx="8" cy="3.8" rx="2" ry="0.9" fill="#fff" opacity="0.7"/></svg>
<svg class="a" style="left:125px;top:805px" width="16" height="16"><circle cx="8" cy="8" r="6.5" fill="url(#tlgi)" stroke="#808080" stroke-width="1"/><ellipse cx="8" cy="3.8" rx="2" ry="0.9" fill="#fff" opacity="0.7"/></svg>
<div class="a t" style="left:530.00px;top:806px;font-size:13px;line-height:13px;font-family:'Liberation Sans';color:#4d4d4d;transform:scaleX(1.0873);">Module : 0</div>
<div class="a t" style="left:99.00px;top:830px;font-size:11px;line-height:11px;font-family:'Liberation Sans';color:#000;transform:scaleX(1.1488);">Tools</div>
<div class="a" style="left:89px;top:842px;width:903px;height:41px;background:#e3e3e3;border:1px solid #c2c2c2;border-radius:5px;box-sizing:border-box;box-shadow:inset 0 1px 0 #d6d6d6"></div>
<div class="a" style="left:104px;top:857px;width:76px;height:11px;background:linear-gradient(#f2f2f2,#fdfdfd 60%,#f0f0f0);border:1px solid #858585;box-sizing:border-box"></div>
<div class="a t" style="left:112.75px;top:858px;font-size:11px;line-height:11px;font-family:'Liberation Sans';color:#000;transform:scaleX(1.0752);">Activate All</div>
<div class="a" style="left:188px;top:857px;width:89px;height:11px;background:linear-gradient(#f2f2f2,#fdfdfd 60%,#f0f0f0);border:1px solid #858585;box-sizing:border-box"></div>
<div class="a t" style="left:196.75px;top:858px;font-size:11px;line-height:11px;font-family:'Liberation Sans';color:#000;transform:scaleX(1.0632);">Deactivate All</div>
<div class="a" style="left:285px;top:857px;width:86px;height:11px;background:linear-gradient(#eeeeee,#f6f6f6 60%,#ececec);border:1px solid #b8b8b8;box-sizing:border-box"></div>
<div class="a t" style="left:294.00px;top:858px;font-size:11px;line-height:11px;font-family:'Liberation Sans';color:#777;transform:scaleX(1.0526);">New Variable</div>
<div class="a" style="left:823px;top:857px;width:74px;height:11px;background:linear-gradient(#f2f2f2,#fdfdfd 60%,#f0f0f0);border:1px solid #858585;box-sizing:border-box"></div>
<div class="a t" style="left:831.80px;top:858px;font-size:11px;line-height:11px;font-family:'Liberation Sans';color:#000;transform:scaleX(1.0480);">Load Conf.</div>
<div class="a" style="left:905px;top:857px;width:72px;height:11px;background:linear-gradient(#f2f2f2,#fdfdfd 60%,#f0f0f0);border:1px solid #858585;box-sizing:border-box"></div>
<div class="a t" style="left:913.60px;top:858px;font-size:11px;line-height:11px;font-family:'Liberation Sans';color:#000;transform:scaleX(1.0070);">Save Conf.</div>
<div class="a" style="left:89px;top:899px;width:903px;height:343px;background:#fff;border:1px solid #a9a9a9;box-sizing:border-box"></div>
<div class="a" style="left:90px;top:900px;width:901px;height:21px;background:#ececec"></div>
<div class="a" style="left:90px;top:900px;width:631px;height:21px;background:linear-gradient(#ffffff,#f4f4f4 50%,#e8e8e8);border-bottom:1px solid #bdbdbd;box-sizing:border-box"></div>
<div class="a" style="left:167px;top:900px;width:97px;height:21px;background:linear-gradient(#dfe6ee,#cfd8e2 50%,#bcc6d2);border-bottom:1px solid #a9b3bf;box-sizing:border-box"></div>
<div class="a t" style="left:111.50px;top:906px;font-size:11px;line-height:11px;font-family:'Liberation Sans';color:#000;transform:scaleX(1.1051);">Activated</div>
<div class="a" style="left:167px;top:900px;width:1px;height:21px;background:#c8c8c8"></div>
<div class="a t" style="left:200.50px;top:906px;font-size:11px;line-height:11px;font-family:'Liberation Sans';color:#000;transform:scaleX(1.0224);">Name</div>
<div class="a" style="left:264px;top:900px;width:1px;height:21px;background:#c8c8c8"></div>
<div class="a t" style="left:270.50px;top:906px;font-size:11px;line-height:11px;font-family:'Liberation Sans';color:#000;transform:scaleX(1.0750);">ValueType</div>
<div class="a" style="left:332px;top:900px;width:1px;height:21px;background:#c8c8c8"></div>
<div class="a t" style="left:339.00px;top:906px;font-size:11px;line-height:11px;font-family:'Liberation Sans';color:#000;transform:scaleX(1.0696);">MemoryType</div>
<div class="a" style="left:414px;top:900px;width:1px;height:21px;background:#c8c8c8"></div>
<div class="a t" style="left:420.50px;top:906px;font-size:11px;line-height:11px;font-family:'Liberation Sans';color:#000;transform:scaleX(1.1123);">Memory Offset</div>
<div class="a" style="left:507px;top:900px;width:1px;height:21px;background:#c8c8c8"></div>
<div class="a t" style="left:562.50px;top:906px;font-size:11px;line-height:11px;font-family:'Liberation Sans';color:#000;transform:scaleX(1.0250);">Value</div>
<div class="a" style="left:646px;top:900px;width:1px;height:21px;background:#c8c8c8"></div>
<div class="a t" style="left:652.50px;top:906px;font-size:11px;line-height:11px;font-family:'Liberation Sans';color:#000;transform:scaleX(1.1087);">Description</div>
<div class="a" style="left:720px;top:900px;width:1px;height:21px;background:#c8c8c8"></div>
<div class="a" style="left:90px;top:920px;width:631px;height:1px;background:#a9a9a9"></div>
<div class="a" style="left:90px;top:921px;width:16px;height:320px;background:#ececec"></div>
<div class="a" style="left:90px;top:941px;width:631px;height:1px;background:#a9a9a9"></div>
<div class="a" style="left:90px;top:921px;width:16px;height:20px;background:linear-gradient(90deg,#c9d3df,#dde4ec)"></div>
<div class="a" style="left:167px;top:921px;width:97px;height:20px;background:#7b8ea8"></div>
<div class="a t" style="left:93.00px;top:928px;font-size:11px;line-height:11px;font-family:'Liberation Sans';color:#000;">1</div>
<svg class="a" style="left:107px;top:921px" width="18" height="19"><rect x="2" y="3.5" width="12" height="13" rx="2" fill="url(#cbg)" stroke="#3c4652" stroke-width="1.1"/><path d="M3.5 9.5 L7 13.5 L14 2" stroke="#111" stroke-width="2" fill="none"/></svg>
<svg class="a" style="left:172px;top:922px" width="16" height="16"><circle cx="8" cy="8" r="7" fill="#7ac022" stroke="#5c9a18" stroke-width="0.6"/><path d="M8 4 V12 M4 8 H12" stroke="#fff" stroke-width="2.4"/></svg>
<div class="a t" style="left:194.00px;top:925px;font-size:13px;line-height:13px;font-family:'Liberation Sans';color:#fff;transform:scaleX(1.0934);">Variable1</div>
<div class="a t" style="left:269.00px;top:925px;font-size:13px;line-height:13px;font-family:'Liberation Sans';color:#000;transform:scaleX(1.1015);">double</div>
<div class="a t" style="left:337.00px;top:925px;font-size:13px;line-height:13px;font-family:'Liberation Sans';color:#000;">RAM</div>
<div class="a t" style="left:420.00px;top:925px;font-size:13px;line-height:13px;font-family:'Liberation Sans';color:#000;">0</div>
<div class="a t" style="left:513.00px;top:925px;font-size:13px;line-height:13px;font-family:'Liberation Sans';color:#000;transform:scaleX(1.1527);">–53.4340547256...</div>
<div class="a t" style="left:652.00px;top:925px;font-size:13px;line-height:13px;font-family:'Liberation Sans';color:#000;transform:scaleX(1.0563);">Variable1</div>
<div class="a" style="left:90px;top:962px;width:631px;height:1px;background:#a9a9a9"></div>
<div class="a t" style="left:93.00px;top:949px;font-size:11px;line-height:11px;font-family:'Liberation Sans';color:#000;">2</div>
<svg class="a" style="left:107px;top:942px" width="18" height="19"><rect x="2" y="3.5" width="12" height="13" rx="2" fill="url(#cbg)" stroke="#3c4652" stroke-width="1.1"/><path d="M3.5 9.5 L7 13.5 L14 2" stroke="#111" stroke-width="2" fill="none"/></svg>
<svg class="a" style="left:172px;top:943px" width="16" height="16"><circle cx="8" cy="8" r="7" fill="#7ac022" stroke="#5c9a18" stroke-width="0.6"/><path d="M8 4 V12 M4 8 H12" stroke="#fff" stroke-width="2.4"/></svg>
<div class="a t" style="left:194.00px;top:946px;font-size:13px;line-height:13px;font-family:'Liberation Sans';color:#000;transform:scaleX(1.0934);">Variable2</div>
<div class="a t" style="left:269.00px;top:946px;font-size:13px;line-height:13px;font-family:'Liberation Sans';color:#000;transform:scaleX(1.1015);">double</div>
<div class="a t" style="left:337.00px;top:946px;font-size:13px;line-height:13px;font-family:'Liberation Sans';color:#000;">RAM</div>
<div class="a t" style="left:420.00px;top:946px;font-size:13px;line-height:13px;font-family:'Liberation Sans';color:#000;">8</div>
<div class="a t" style="left:513.00px;top:946px;font-size:13px;line-height:13px;font-family:'Liberation Sans';color:#000;transform:scaleX(1.1155);">8.20915801768864</div>
<div class="a t" style="left:652.00px;top:946px;font-size:13px;line-height:13px;font-family:'Liberation Sans';color:#000;transform:scaleX(1.0563);">Variable2</div>
<div class="a" style="left:90px;top:983px;width:631px;height:1px;background:#a9a9a9"></div>
<div class="a t" style="left:93.00px;top:970px;font-size:11px;line-height:11px;font-family:'Liberation Sans';color:#000;">3</div>
<svg class="a" style="left:107px;top:963px" width="18" height="19"><rect x="2" y="3.5" width="12" height="13" rx="2" fill="url(#cbg)" stroke="#3c4652" stroke-width="1.1"/><path d="M3.5 9.5 L7 13.5 L14 2" stroke="#111" stroke-width="2" fill="none"/></svg>
<svg class="a" style="left:172px;top:964px" width="16" height="16"><circle cx="8" cy="8" r="7" fill="#7ac022" stroke="#5c9a18" stroke-width="0.6"/><path d="M8 4 V12 M4 8 H12" stroke="#fff" stroke-width="2.4"/></svg>
<div class="a t" style="left:194.00px;top:967px;font-size:13px;line-height:13px;font-family:'Liberation Sans';color:#000;transform:scaleX(1.0934);">Variable3</div>
<div class="a t" style="left:269.00px;top:967px;font-size:13px;line-height:13px;font-family:'Liberation Sans';color:#000;transform:scaleX(1.1015);">double</div>
<div class="a t" style="left:337.00px;top:967px;font-size:13px;line-height:13px;font-family:'Liberation Sans';color:#000;">RAM</div>
<div class="a t" style="left:420.00px;top:967px;font-size:13px;line-height:13px;font-family:'Liberation Sans';color:#000;">16</div>
<div class="a t" style="left:513.00px;top:967px;font-size:13px;line-height:13px;font-family:'Liberation Sans';color:#000;transform:scaleX(1.1155);">66.5449251803882</div>
<div class="a t" style="left:652.00px;top:967px;font-size:13px;line-height:13px;font-family:'Liberation Sans';color:#000;transform:scaleX(1.0563);">Variable3</div>
<div class="a" style="left:90px;top:1004px;width:631px;height:1px;background:#a9a9a9"></div>
<div class="a t" style="left:93.00px;top:991px;font-size:11px;line-height:11px;font-family:'Liberation Sans';color:#000;">4</div>
<svg class="a" style="left:107px;top:984px" width="18" height="19"><rect x="2" y="3.5" width="12" height="13" rx="2" fill="url(#cbg)" stroke="#3c4652" stroke-width="1.1"/><path d="M3.5 9.5 L7 13.5 L14 2" stroke="#111" stroke-width="2" fill="none"/></svg>
<svg class="a" style="left:172px;top:985px" width="16" height="16"><circle cx="8" cy="8" r="7" fill="#7ac022" stroke="#5c9a18" stroke-width="0.6"/><path d="M8 4 V12 M4 8 H12" stroke="#fff" stroke-width="2.4"/></svg>
<div class="a t" style="left:194.00px;top:988px;font-size:13px;line-height:13px;font-family:'Liberation Sans';color:#000;transform:scaleX(1.0934);">Variable4</div>
<div class="a t" style="left:269.00px;top:988px;font-size:13px;line-height:13px;font-family:'Liberation Sans';color:#000;transform:scaleX(1.1015);">double</div>
<div class="a t" style="left:337.00px;top:988px;font-size:13px;line-height:13px;font-family:'Liberation Sans';color:#000;">RAM</div>
<div class="a t" style="left:420.00px;top:988px;font-size:13px;line-height:13px;font-family:'Liberation Sans';color:#000;">24</div>
<div class="a t" style="left:513.00px;top:988px;font-size:13px;line-height:13px;font-family:'Liberation Sans';color:#000;transform:scaleX(1.1155);">95.7040593773289</div>
<div class="a t" style="left:652.00px;top:988px;font-size:13px;line-height:13px;font-family:'Liberation Sans';color:#000;transform:scaleX(1.0563);">Variable4</div>
<div class="a" style="left:106px;top:921px;width:1px;height:84px;background:#a9a9a9"></div>
<div class="a" style="left:167px;top:921px;width:1px;height:84px;background:#a9a9a9"></div>
<div class="a" style="left:264px;top:921px;width:1px;height:84px;background:#a9a9a9"></div>
<div class="a" style="left:332px;top:921px;width:1px;height:84px;background:#a9a9a9"></div>
<div class="a" style="left:414px;top:921px;width:1px;height:84px;background:#a9a9a9"></div>
<div class="a" style="left:507px;top:921px;width:1px;height:84px;background:#a9a9a9"></div>
<div class="a" style="left:646px;top:921px;width:1px;height:84px;background:#a9a9a9"></div>
<div class="a" style="left:720px;top:921px;width:1px;height:84px;background:#a9a9a9"></div>
<svg class="a" style="left:991px;top:1241px" width="14" height="14"><path d="M2 13 L13 2 M6 13 L13 6 M10 13 L13 10" stroke="#6a6a6a" stroke-width="1"/></svg>
<div class="a" style="left:1128px;top:846px;width:360px;height:310px;background:#ececec;border-radius:6px 6px 0 0;overflow:hidden"><div class="a" style="left:0;top:0;width:360px;height:22px;background:linear-gradient(#f4f4f4 0px,#f4f4f4 1px,#ececec 2px,#e3e3e3 12px,#d8d8d8 21px)"></div></div>
<svg class="a" style="left:1135px;top:849px" width="16" height="16"><circle cx="8" cy="8" r="6.5" fill="url(#tlgi)" stroke="#808080" stroke-width="1"/><ellipse cx="8" cy="3.8" rx="2" ry="0.9" fill="#fff" opacity="0.7"/></svg>
<svg class="a" style="left:1156px;top:849px" width="16" height="16"><circle cx="8" cy="8" r="6.5" fill="url(#tlgi)" stroke="#808080" stroke-width="1"/><ellipse cx="8" cy="3.8" rx="2" ry="0.9" fill="#fff" opacity="0.7"/></svg>
<svg class="a" style="left:1177px;top:849px" width="16" height="16"><circle cx="8" cy="8" r="6.5" fill="url(#tlgi)" stroke="#808080" stroke-width="1"/><ellipse cx="8" cy="3.8" rx="2" ry="0.9" fill="#fff" opacity="0.7"/></svg>
<div class="a t" style="left:1284.00px;top:850px;font-size:13px;line-height:13px;font-family:'Liberation Sans';color:#4d4d4d;transform:scaleX(1.0749);">Plugin : Logger</div>
<div class="a" style="left:1141px;top:884px;width:127px;height:22px;background:#fff;border:1px solid #9c9c9c;box-shadow:inset 0 1px 1px #c8c8c8;box-sizing:border-box"></div>
<div class="a" style="left:1276px;top:885px;width:51px;height:21px;box-sizing:border-box;border:1px solid #7c7c7c;border-radius:10.5px;background:linear-gradient(#ffffff,#f2f2f2 50%,#e4e4e4 55%,#f4f4f4 100%);box-shadow:0 1px 1px rgba(0,0,0,0.25)"></div>
<div class="a t" style="left:1291.00px;top:888px;font-size:13px;line-height:13px;font-family:'Liberation Sans';color:#000;">File</div>
<div class="a" style="left:1341px;top:885px;width:58px;height:21px;box-sizing:border-box;border:1px solid #7c7c7c;border-radius:10.5px;background:linear-gradient(#ffffff,#f2f2f2 50%,#e4e4e4 55%,#f4f4f4 100%);box-shadow:0 1px 1px rgba(0,0,0,0.25)"></div>
<div class="a t" style="left:1355.50px;top:888px;font-size:13px;line-height:13px;font-family:'Liberation Sans';color:#000;transform:scaleX(1.0563);">Start</div>
<div class="a" style="left:1413px;top:885px;width:56px;height:21px;box-sizing:border-box;border:1px solid #7c7c7c;border-radius:10.5px;background:linear-gradient(#ffffff,#f2f2f2 50%,#e4e4e4 55%,#f4f4f4 100%);box-shadow:0 1px 1px rgba(0,0,0,0.25)"></div>
<div class="a t" style="left:1428.00px;top:888px;font-size:13px;line-height:13px;font-family:'Liberation Sans';color:#000;transform:scaleX(0.9722);">Stop</div>
<div class="a" style="left:1141px;top:928px;width:334px;height:15px;background:#ff0000"></div>
<div class="a t" style="left:1141.00px;top:929px;font-size:13px;line-height:13px;font-family:'Liberation Sans';font-weight:bold;color:#000;transform:scaleX(0.9841);">NOT Logging</div>
<div class="a" style="left:1141px;top:951px;width:334px;height:192px;background:#fff;border:1px solid #a9a9a9;box-sizing:border-box"></div>
<div class="a" style="left:1142px;top:952px;width:332px;height:21px;background:linear-gradient(#ffffff,#f4f4f4 50%,#e8e8e8);border-bottom:1px solid #c2c2c2;box-sizing:border-box"></div>
<div class="a" style="left:1203px;top:952px;width:1px;height:21px;background:#c8c8c8"></div>
<div class="a" style="left:1243px;top:952px;width:1px;height:21px;background:#c8c8c8"></div>
<div class="a" style="left:1311px;top:952px;width:1px;height:21px;background:#c8c8c8"></div>
<div class="a" style="left:1393px;top:952px;width:1px;height:21px;background:#c8c8c8"></div>
<div class="a" style="left:1142px;top:952px;width:332px;height:21px;overflow:hidden">
<div class="a t" style="left:5.50px;top:6px;font-size:11px;line-height:11px;font-family:'Liberation Sans';color:#000;transform:scaleX(1.0830);">Activated</div>
<div class="a t" style="left:66.00px;top:6px;font-size:11px;line-height:11px;font-family:'Liberation Sans';color:#000;transform:scaleX(1.0224);">Name</div>
<div class="a t" style="left:107.50px;top:6px;font-size:11px;line-height:11px;font-family:'Liberation Sans';color:#000;transform:scaleX(1.0750);">ValueType</div>
<div class="a t" style="left:176.00px;top:6px;font-size:11px;line-height:11px;font-family:'Liberation Sans';color:#000;transform:scaleX(1.0696);">MemoryType</div>
<div class="a t" style="left:259.00px;top:6px;font-size:11px;line-height:11px;font-family:'Liberation Sans';color:#000;transform:scaleX(1.1123);">Memory Offset</div>
</div>
<div class="a" style="left:1142px;top:1127px;width:332px;height:15px;background:linear-gradient(#c6c6c6,#ececec 25%,#fbfbfb 60%,#e6e6e6);border-top:1px solid #b8b8b8;box-sizing:border-box"></div>
<svg class="a" style="left:1142px;top:1127px" width="332" height="15"><rect x="5.5" y="1.5" width="166" height="12" rx="6" fill="url(#hthumbg)" stroke="#24364c" stroke-width="1"/><line x1="316.5" y1="2" x2="316.5" y2="15" stroke="#d0d0d0"/><path d="M304 7.5 L309 4.5 V10.5 Z" fill="#4a4a4a"/><path d="M321 4.5 L326 7.5 L321 10.5 Z" fill="#4a4a4a"/></svg>
<svg class="a" style="left:1474px;top:1142px" width="14" height="14"><path d="M2 13 L13 2 M6 13 L13 6 M10 13 L13 10" stroke="#6a6a6a" stroke-width="1"/></svg>
<div class="a" style="left:1630px;top:286px;width:851px;height:908px;background:#ececec;border-radius:6px 6px 0 0;overflow:hidden"><div class="a" style="left:0;top:0;width:851px;height:22px;background:linear-gradient(#f4f4f4 0px,#f4f4f4 1px,#ececec 2px,#e3e3e3 12px,#d8d8d8 21px)"></div></div>
<svg class="a" style="left:1637px;top:289px" width="16" height="16"><circle cx="8" cy="8" r="6.5" fill="url(#tlgi)" stroke="#808080" stroke-width="1"/><ellipse cx="8" cy="3.8" rx="2" ry="0.9" fill="#fff" opacity="0.7"/></svg>
<svg class="a" style="left:1658px;top:289px" width="16" height="16"><circle cx="8" cy="8" r="6.5" fill="url(#tlgi)" stroke="#808080" stroke-width="1"/><ellipse cx="8" cy="3.8" rx="2" ry="0.9" fill="#fff" opacity="0.7"/></svg>
<svg class="a" style="left:1679px;top:289px" width="16" height="16"><circle cx="8" cy="8" r="6.5" fill="url(#tlgi)" stroke="#808080" stroke-width="1"/><ellipse cx="8" cy="3.8" rx="2" ry="0.9" fill="#fff" opacity="0.7"/></svg>
<div class="a t" style="left:2014.00px;top:290px;font-size:13px;line-height:13px;font-family:'Liberation Sans';color:#4d4d4d;transform:scaleX(1.0606);">Plugin : ScriptEngine</div>
<div class="a t" style="left:1670.00px;top:334px;font-size:13px;line-height:13px;font-family:'Liberation Sans';color:#000;transform:scaleX(0.9632);">ScriptEngine</div>
<div class="a" style="left:1779px;top:324px;width:128px;height:33px;border:1px solid #ffffff;border-right-color:#c4c4c4;border-bottom-color:#c4c4c4;box-shadow:inset 1px 1px 0 #c4c4c4, inset -1px -1px 0 #fff;box-sizing:border-box;background:#ececec"></div>
<div class="a" style="left:1917px;top:324px;width:128px;height:33px;border:1px solid #ffffff;border-right-color:#c4c4c4;border-bottom-color:#c4c4c4;box-shadow:inset 1px 1px 0 #c4c4c4, inset -1px -1px 0 #fff;box-sizing:border-box;background:#ececec"></div>
<svg class="a" style="left:1867px;top:328px" width="16" height="28"><line x1="2.5" y1="1" x2="10.5" y2="1" stroke="#ffffff" stroke-width="1.2"/><line x1="1" y1="2.5" x2="1" y2="11.5" stroke="#ffffff" stroke-width="1.2"/><line x1="2.5" y1="13.0" x2="10.5" y2="13.0" stroke="#ffffff" stroke-width="1.2"/><line x1="1" y1="14.5" x2="1" y2="23.5" stroke="#ffffff" stroke-width="1.2"/><line x1="2.5" y1="25" x2="10.5" y2="25" stroke="#ffffff" stroke-width="1.2"/><line x1="12" y1="14.5" x2="12" y2="23.5" stroke="#ffffff" stroke-width="1.2"/></svg>
<svg class="a" style="left:2005px;top:328px" width="16" height="28"><line x1="2.5" y1="1" x2="10.5" y2="1" stroke="#ffffff" stroke-width="1.2"/><line x1="12" y1="2.5" x2="12" y2="11.5" stroke="#ffffff" stroke-width="1.2"/><line x1="12" y1="14.5" x2="12" y2="23.5" stroke="#ffffff" stroke-width="1.2"/><line x1="2.5" y1="25" x2="10.5" y2="25" stroke="#ffffff" stroke-width="1.2"/><line x1="1" y1="14.5" x2="1" y2="23.5" stroke="#ffffff" stroke-width="1.2"/><line x1="1" y1="2.5" x2="1" y2="11.5" stroke="#ffffff" stroke-width="1.2"/></svg>
<svg class="a" style="left:1866px;top:327px" width="16" height="28"><line x1="2.5" y1="1" x2="10.5" y2="1" stroke="#000" stroke-width="1.3"/><line x1="1" y1="2.5" x2="1" y2="11.5" stroke="#000" stroke-width="1.3"/><line x1="2.5" y1="13.0" x2="10.5" y2="13.0" stroke="#000" stroke-width="1.3"/><line x1="1" y1="14.5" x2="1" y2="23.5" stroke="#000" stroke-width="1.3"/><line x1="2.5" y1="25" x2="10.5" y2="25" stroke="#000" stroke-width="1.3"/><line x1="12" y1="14.5" x2="12" y2="23.5" stroke="#000" stroke-width="1.3"/></svg>
<svg class="a" style="left:2004px;top:327px" width="16" height="28"><line x1="2.5" y1="1" x2="10.5" y2="1" stroke="#000" stroke-width="1.3"/><line x1="12" y1="2.5" x2="12" y2="11.5" stroke="#000" stroke-width="1.3"/><line x1="12" y1="14.5" x2="12" y2="23.5" stroke="#000" stroke-width="1.3"/><line x1="2.5" y1="25" x2="10.5" y2="25" stroke="#000" stroke-width="1.3"/><line x1="1" y1="14.5" x2="1" y2="23.5" stroke="#000" stroke-width="1.3"/><line x1="1" y1="2.5" x2="1" y2="11.5" stroke="#000" stroke-width="1.3"/></svg>
<div class="a t" style="left:2055.00px;top:334px;font-size:14px;line-height:14px;font-family:'Liberation Sans';font-weight:bold;color:#000;transform:scaleX(1.0393);">Period(ms)</div>
<div class="a" style="left:2193px;top:329px;width:110px;height:23px;background:#fff;border-top:1px solid #b0b0b0;box-shadow:inset 0 1px 1px #d8d8d8;box-sizing:border-box"></div>
<div class="a t" style="left:2195.00px;top:334px;font-size:14px;line-height:14px;font-family:'Liberation Sans';color:#000;transform:scaleX(1.0917);">50</div>
<svg class="a" style="left:2306px;top:329px" width="15" height="23"><rect x="0.5" y="0.5" width="13" height="21" rx="4" fill="#fafafa" stroke="#6d6d6d"/><path d="M4.2 7.6 L7 3.2 L9.8 7.6 Z M4.2 13.3 L9.8 13.3 L7 17.5 Z" fill="#3a3a3a"/></svg>
<div class="a" style="left:2334px;top:324px;width:128px;height:33px;background:linear-gradient(#f4f4f4,#fdfdfd 50%,#efefef);border:1px solid #8f8f8f;box-sizing:border-box"></div>
<div class="a t" style="left:2383.00px;top:334px;font-size:14px;line-height:14px;font-family:'Liberation Sans';color:#000;transform:scaleX(1.0419);">Help</div>
<div class="a" style="left:2328px;top:383px;width:61px;height:21px;box-sizing:border-box;border:1px solid #7c7c7c;border-radius:10.5px;background:linear-gradient(#ffffff,#f2f2f2 50%,#e4e4e4 55%,#f4f4f4 100%);box-shadow:0 1px 1px rgba(0,0,0,0.25)"></div>
<div class="a t" style="left:2343.50px;top:386px;font-size:13px;line-height:13px;font-family:'Liberation Sans';color:#000;transform:scaleX(1.0373);">Load</div>
<div class="a" style="left:2399px;top:383px;width:63px;height:21px;box-sizing:border-box;border:1px solid #7c7c7c;border-radius:10.5px;background:linear-gradient(#ffffff,#f2f2f2 50%,#e4e4e4 55%,#f4f4f4 100%);box-shadow:0 1px 1px rgba(0,0,0,0.25)"></div>
<div class="a t" style="left:2414.00px;top:386px;font-size:13px;line-height:13px;font-family:'Liberation Sans';color:#000;transform:scaleX(0.9386);">STOP</div>
<div class="a" style="left:1643px;top:421px;width:825px;height:392px;background:#d4d0c8;border:1px solid #8c8a84;box-sizing:border-box"></div>
<div class="a" style="left:1648px;top:426px;width:815px;height:364px;background:#f9f9f9"></div>
<div class="a t" style="left:1648.00px;top:428px;font-size:11px;line-height:11px;font-family:'Liberation Mono';color:#404040;transform:scaleX(1.0907);">if (cycle == 0)</div>
<div class="a t" style="left:1648.00px;top:442px;font-size:11px;line-height:11px;font-family:'Liberation Mono';color:#404040;transform:scaleX(1.0907);">{</div>
<div class="a t" style="left:1728.00px;top:456px;font-size:11px;line-height:11px;font-family:'Liberation Mono';color:#404040;transform:scaleX(1.0907);">addPseudoModule(500);</div>
<div class="a t" style="left:1728.00px;top:470px;font-size:11px;line-height:11px;font-family:'Liberation Mono';color:#404040;transform:scaleX(1.0907);">addScriptVariable(500,"Sinus1","Sinus1 value");</div>
<div class="a t" style="left:1728.00px;top:484px;font-size:11px;line-height:11px;font-family:'Liberation Mono';color:#404040;transform:scaleX(1.0907);">addToPlot(500,modules[500].Sinus1.index);</div>
<div class="a t" style="left:1728.00px;top:512px;font-size:11px;line-height:11px;font-family:'Liberation Mono';color:#404040;transform:scaleX(1.0907);">addScriptVariable(500,"Sinus2","Sinus2 value");</div>
<div class="a t" style="left:1728.00px;top:526px;font-size:11px;line-height:11px;font-family:'Liberation Mono';color:#404040;transform:scaleX(1.0907);">addToPlot(500,modules[500].Sinus2.index);</div>
<div class="a t" style="left:1728.00px;top:568px;font-size:11px;line-height:11px;font-family:'Liberation Mono';color:#404040;transform:scaleX(1.0907);">addScriptVariable(500,"Sinus3","Sinus3 value");</div>
<div class="a t" style="left:1728.00px;top:582px;font-size:11px;line-height:11px;font-family:'Liberation Mono';color:#404040;transform:scaleX(1.0907);">addToPlot(500,modules[500].Sinus3.index);</div>
<div class="a t" style="left:1728.00px;top:610px;font-size:11px;line-height:11px;font-family:'Liberation Mono';color:#404040;transform:scaleX(1.0907);">freq = 0.1;</div>
<div class="a t" style="left:1728.00px;top:624px;font-size:11px;line-height:11px;font-family:'Liberation Mono';color:#404040;transform:scaleX(1.0907);">amplitude = 100;</div>
<div class="a t" style="left:1648.00px;top:638px;font-size:11px;line-height:11px;font-family:'Liberation Mono';color:#404040;transform:scaleX(1.0907);">}</div>
<div class="a t" style="left:1648.00px;top:666px;font-size:11px;line-height:11px;font-family:'Liberation Mono';color:#404040;transform:scaleX(1.0907);">SinValue1 = 100 * Math.sin(2 * Math.PI * freq * time);</div>
<div class="a t" style="left:1648.00px;top:680px;font-size:11px;line-height:11px;font-family:'Liberation Mono';color:#404040;transform:scaleX(1.0907);">SinValue2 = 50 * Math.sin(4 * Math.PI * freq * time);</div>
<div class="a t" style="left:1648.00px;top:694px;font-size:11px;line-height:11px;font-family:'Liberation Mono';color:#404040;transform:scaleX(1.0907);">SinValue3 = 80 * Math.sin(6 * Math.PI * freq * time);</div>
<div class="a t" style="left:1648.00px;top:736px;font-size:11px;line-height:11px;font-family:'Liberation Mono';color:#404040;transform:scaleX(1.0907);">modules[500].Sinus1.setUserValue(SinValue1);</div>
<div class="a t" style="left:1648.00px;top:750px;font-size:11px;line-height:11px;font-family:'Liberation Mono';color:#404040;transform:scaleX(1.0907);">modules[500].Sinus2.setUserValue(SinValue2);</div>
<div class="a t" style="left:1648.00px;top:764px;font-size:11px;line-height:11px;font-family:'Liberation Mono';color:#404040;transform:scaleX(1.0907);">modules[500].Sinus3.setUserValue(SinValue3);</div>
<div class="a t" style="left:1648.00px;top:778px;font-size:11px;line-height:11px;font-family:'Liberation Mono';color:#404040;transform:scaleX(1.0907);">time;</div>
<svg class="a" style="left:2050px;top:812px" width="10" height="6"><path d="M1 5 L5 1 L9 5" stroke="#888" fill="none"/></svg>
<div class="a t" style="left:1643.00px;top:821px;font-size:12px;line-height:12px;font-family:'Liberation Sans';color:#000;transform:scaleX(1.0056);">Messages</div>
<div class="a" style="left:1643px;top:843px;width:825px;height:338px;background:#fff;border:1px solid #a4a4a4;box-sizing:border-box"></div>
<div class="a" style="left:1644px;top:844px;width:808px;height:336px;overflow:hidden">
<div class="a t" style="left:3.00px;top:-11px;font-size:12px;line-height:12px;font-family:'Liberation Sans';color:#000;transform:scaleX(1.1194);">Script returned with : 44.378</div>
<div class="a t" style="left:3.00px;top:4px;font-size:12px;line-height:12px;font-family:'Liberation Sans';color:#000;transform:scaleX(1.1194);">Script returned with : 44.428</div>
<div class="a t" style="left:3.00px;top:19px;font-size:12px;line-height:12px;font-family:'Liberation Sans';color:#000;transform:scaleX(1.1194);">Script returned with : 44.478</div>
<div class="a t" style="left:3.00px;top:34px;font-size:12px;line-height:12px;font-family:'Liberation Sans';color:#000;transform:scaleX(1.1194);">Script returned with : 44.528</div>
<div class="a t" style="left:3.00px;top:49px;font-size:12px;line-height:12px;font-family:'Liberation Sans';color:#000;transform:scaleX(1.1194);">Script returned with : 44.578</div>
<div class="a t" style="left:3.00px;top:64px;font-size:12px;line-height:12px;font-family:'Liberation Sans';color:#000;transform:scaleX(1.1194);">Script returned with : 44.628</div>
<div class="a t" style="left:3.00px;top:79px;font-size:12px;line-height:12px;font-family:'Liberation Sans';color:#000;transform:scaleX(1.1194);">Script returned with : 44.678</div>
<div class="a t" style="left:3.00px;top:94px;font-size:12px;line-height:12px;font-family:'Liberation Sans';color:#000;transform:scaleX(1.1194);">Script returned with : 44.728</div>
<div class="a t" style="left:3.00px;top:109px;font-size:12px;line-height:12px;font-family:'Liberation Sans';color:#000;transform:scaleX(1.1194);">Script returned with : 44.778</div>
<div class="a t" style="left:3.00px;top:124px;font-size:12px;line-height:12px;font-family:'Liberation Sans';color:#000;transform:scaleX(1.1194);">Script returned with : 44.828</div>
<div class="a t" style="left:3.00px;top:139px;font-size:12px;line-height:12px;font-family:'Liberation Sans';color:#000;transform:scaleX(1.1194);">Script returned with : 44.877</div>
<div class="a t" style="left:3.00px;top:154px;font-size:12px;line-height:12px;font-family:'Liberation Sans';color:#000;transform:scaleX(1.1194);">Script returned with : 44.927</div>
<div class="a t" style="left:3.00px;top:169px;font-size:12px;line-height:12px;font-family:'Liberation Sans';color:#000;transform:scaleX(1.1194);">Script returned with : 44.977</div>
<div class="a t" style="left:3.00px;top:184px;font-size:12px;line-height:12px;font-family:'Liberation Sans';color:#000;transform:scaleX(1.1194);">Script returned with : 45.028</div>
<div class="a t" style="left:3.00px;top:199px;font-size:12px;line-height:12px;font-family:'Liberation Sans';color:#000;transform:scaleX(1.1194);">Script returned with : 45.077</div>
<div class="a t" style="left:3.00px;top:214px;font-size:12px;line-height:12px;font-family:'Liberation Sans';color:#000;transform:scaleX(1.1194);">Script returned with : 45.127</div>
<div class="a t" style="left:3.00px;top:229px;font-size:12px;line-height:12px;font-family:'Liberation Sans';color:#000;transform:scaleX(1.1194);">Script returned with : 45.177</div>
<div class="a t" style="left:3.00px;top:244px;font-size:12px;line-height:12px;font-family:'Liberation Sans';color:#000;transform:scaleX(1.1194);">Script returned with : 45.232</div>
<div class="a t" style="left:3.00px;top:259px;font-size:12px;line-height:12px;font-family:'Liberation Sans';color:#000;transform:scaleX(1.1194);">Script returned with : 45.277</div>
<div class="a t" style="left:3.00px;top:274px;font-size:12px;line-height:12px;font-family:'Liberation Sans';color:#000;transform:scaleX(1.1194);">Script returned with : 45.327</div>
<div class="a t" style="left:3.00px;top:289px;font-size:12px;line-height:12px;font-family:'Liberation Sans';color:#000;transform:scaleX(1.1194);">Script returned with : 45.378</div>
<div class="a t" style="left:3.00px;top:304px;font-size:12px;line-height:12px;font-family:'Liberation Sans';color:#000;transform:scaleX(1.1194);">Script returned with : 45.428</div>
<div class="a t" style="left:3.00px;top:319px;font-size:12px;line-height:12px;font-family:'Liberation Sans';color:#000;transform:scaleX(1.1194);">Script returned with : 45.478</div>
</div>
<div class="a" style="left:2452px;top:844px;width:14px;height:336px;background:#f6f6f6;border-left:1px solid #b8b8b8"></div>
<div class="a" style="left:2453px;top:850px;width:14px;height:330px;border-radius:7px 7px 0 0;background:linear-gradient(90deg,#c6c6c6 0%,#e2e2e2 25%,#fbfbfb 60%,#f0f0f0 100%);box-shadow:inset 0 1px 1px #9a9a9a"></div>
<svg class="a" style="left:2453px;top:1127px" width="15" height="21"><rect x="1" y="0.5" width="12.5" height="20" rx="6.2" fill="url(#thumbg)" stroke="#1a2c44" stroke-width="1"/><rect x="3.5" y="4" width="2.5" height="13" rx="1.2" fill="#fff" opacity="0.55"/></svg>
<svg class="a" style="left:2453px;top:1150px" width="15" height="30"><line x1="0" y1="15.5" x2="15" y2="15.5" stroke="#c4c4c4"/><path d="M4 11 L7.5 6 L11 11 Z" fill="#4a4a4a"/><path d="M4 20 L11 20 L7.5 25 Z" fill="#4a4a4a"/></svg>
<svg class="a" style="left:2467px;top:1180px" width="14" height="14"><path d="M2 13 L13 2 M6 13 L13 6 M10 13 L13 10" stroke="#6a6a6a" stroke-width="1"/></svg>
<div class="a t" style="left:6.00px;top:1339px;font-size:13px;line-height:13px;font-family:'Liberation Sans';color:#000;transform:scaleX(1.0782);">Please select device first from the File menu</div>
<div class="a t" style="left:2138.00px;top:1339px;font-size:13px;line-height:13px;font-family:'Liberation Sans';color:#000;transform:scaleX(1.0465);">Loopback</div>
<div class="a t" style="left:2205.00px;top:1339px;font-size:13px;line-height:13px;font-family:'Liberation Sans';color:#000;">Received:</div>
<div class="a t" style="left:2386.00px;top:1339px;font-size:13px;line-height:13px;font-family:'Liberation Sans';color:#000;">Sent:</div>
<div class="a" style="left:2272px;top:1334px;width:109px;height:23px;border:1px solid #ffffff;border-right-color:#bdbdbd;border-bottom-color:#bdbdbd;box-shadow:inset 1px 1px 0 #bdbdbd, inset -1px -1px 0 #fff;box-sizing:border-box;background:#ececec"></div>
<div class="a" style="left:2425px;top:1334px;width:109px;height:23px;border:1px solid #ffffff;border-right-color:#bdbdbd;border-bottom-color:#bdbdbd;box-shadow:inset 1px 1px 0 #bdbdbd, inset -1px -1px 0 #fff;box-sizing:border-box;background:#ececec"></div>
<svg class="a" style="left:2328px;top:1338px" width="49.0" height="19"><line x1="1.9" y1="1" x2="7.1" y2="1" stroke="#ffffff" stroke-width="1.2"/><line x1="8.0" y1="1.9" x2="8.0" y2="7.6" stroke="#ffffff" stroke-width="1.2"/><line x1="1.9" y1="8.5" x2="7.1" y2="8.5" stroke="#ffffff" stroke-width="1.2"/><line x1="1.0" y1="9.4" x2="1.0" y2="15.1" stroke="#ffffff" stroke-width="1.2"/><line x1="1.9" y1="16" x2="7.1" y2="16" stroke="#ffffff" stroke-width="1.2"/><line x1="10.0" y1="1.9" x2="10.0" y2="7.6" stroke="#ffffff" stroke-width="1.2"/><line x1="10.9" y1="8.5" x2="16.1" y2="8.5" stroke="#ffffff" stroke-width="1.2"/><line x1="17.0" y1="1.9" x2="17.0" y2="7.6" stroke="#ffffff" stroke-width="1.2"/><line x1="17.0" y1="9.4" x2="17.0" y2="15.1" stroke="#ffffff" stroke-width="1.2"/><line x1="19.9" y1="1" x2="25.1" y2="1" stroke="#ffffff" stroke-width="1.2"/><line x1="26.0" y1="1.9" x2="26.0" y2="7.6" stroke="#ffffff" stroke-width="1.2"/><line x1="26.0" y1="9.4" x2="26.0" y2="15.1" stroke="#ffffff" stroke-width="1.2"/><line x1="19.9" y1="16" x2="25.1" y2="16" stroke="#ffffff" stroke-width="1.2"/><line x1="19.0" y1="9.4" x2="19.0" y2="15.1" stroke="#ffffff" stroke-width="1.2"/><line x1="19.0" y1="1.9" x2="19.0" y2="7.6" stroke="#ffffff" stroke-width="1.2"/><line x1="28.9" y1="1" x2="34.1" y2="1" stroke="#ffffff" stroke-width="1.2"/><line x1="35.0" y1="1.9" x2="35.0" y2="7.6" stroke="#ffffff" stroke-width="1.2"/><line x1="28.9" y1="8.5" x2="34.1" y2="8.5" stroke="#ffffff" stroke-width="1.2"/><line x1="28.0" y1="9.4" x2="28.0" y2="15.1" stroke="#ffffff" stroke-width="1.2"/><line x1="28.9" y1="16" x2="34.1" y2="16" stroke="#ffffff" stroke-width="1.2"/><line x1="37.9" y1="1" x2="43.1" y2="1" stroke="#ffffff" stroke-width="1.2"/><line x1="44.0" y1="1.9" x2="44.0" y2="7.6" stroke="#ffffff" stroke-width="1.2"/><line x1="37.9" y1="8.5" x2="43.1" y2="8.5" stroke="#ffffff" stroke-width="1.2"/><line x1="37.0" y1="9.4" x2="37.0" y2="15.1" stroke="#ffffff" stroke-width="1.2"/><line x1="37.9" y1="16" x2="43.1" y2="16" stroke="#ffffff" stroke-width="1.2"/></svg>
<svg class="a" style="left:2327px;top:1337px" width="49.0" height="19"><line x1="1.9" y1="1" x2="7.1" y2="1" stroke="#bcbcbc" stroke-width="1.2"/><line x1="8.0" y1="1.9" x2="8.0" y2="7.6" stroke="#bcbcbc" stroke-width="1.2"/><line x1="1.9" y1="8.5" x2="7.1" y2="8.5" stroke="#bcbcbc" stroke-width="1.2"/><line x1="1.0" y1="9.4" x2="1.0" y2="15.1" stroke="#bcbcbc" stroke-width="1.2"/><line x1="1.9" y1="16" x2="7.1" y2="16" stroke="#bcbcbc" stroke-width="1.2"/><line x1="10.0" y1="1.9" x2="10.0" y2="7.6" stroke="#bcbcbc" stroke-width="1.2"/><line x1="10.9" y1="8.5" x2="16.1" y2="8.5" stroke="#bcbcbc" stroke-width="1.2"/><line x1="17.0" y1="1.9" x2="17.0" y2="7.6" stroke="#bcbcbc" stroke-width="1.2"/><line x1="17.0" y1="9.4" x2="17.0" y2="15.1" stroke="#bcbcbc" stroke-width="1.2"/><line x1="19.9" y1="1" x2="25.1" y2="1" stroke="#bcbcbc" stroke-width="1.2"/><line x1="26.0" y1="1.9" x2="26.0" y2="7.6" stroke="#bcbcbc" stroke-width="1.2"/><line x1="26.0" y1="9.4" x2="26.0" y2="15.1" stroke="#bcbcbc" stroke-width="1.2"/><line x1="19.9" y1="16" x2="25.1" y2="16" stroke="#bcbcbc" stroke-width="1.2"/><line x1="19.0" y1="9.4" x2="19.0" y2="15.1" stroke="#bcbcbc" stroke-width="1.2"/><line x1="19.0" y1="1.9" x2="19.0" y2="7.6" stroke="#bcbcbc" stroke-width="1.2"/><line x1="28.9" y1="1" x2="34.1" y2="1" stroke="#bcbcbc" stroke-width="1.2"/><line x1="35.0" y1="1.9" x2="35.0" y2="7.6" stroke="#bcbcbc" stroke-width="1.2"/><line x1="28.9" y1="8.5" x2="34.1" y2="8.5" stroke="#bcbcbc" stroke-width="1.2"/><line x1="28.0" y1="9.4" x2="28.0" y2="15.1" stroke="#bcbcbc" stroke-width="1.2"/><line x1="28.9" y1="16" x2="34.1" y2="16" stroke="#bcbcbc" stroke-width="1.2"/><line x1="37.9" y1="1" x2="43.1" y2="1" stroke="#bcbcbc" stroke-width="1.2"/><line x1="44.0" y1="1.9" x2="44.0" y2="7.6" stroke="#bcbcbc" stroke-width="1.2"/><line x1="37.9" y1="8.5" x2="43.1" y2="8.5" stroke="#bcbcbc" stroke-width="1.2"/><line x1="37.0" y1="9.4" x2="37.0" y2="15.1" stroke="#bcbcbc" stroke-width="1.2"/><line x1="37.9" y1="16" x2="43.1" y2="16" stroke="#bcbcbc" stroke-width="1.2"/></svg>
<svg class="a" style="left:2481px;top:1338px" width="49.0" height="19"><line x1="1.9" y1="1" x2="7.1" y2="1" stroke="#ffffff" stroke-width="1.2"/><line x1="8.0" y1="1.9" x2="8.0" y2="7.6" stroke="#ffffff" stroke-width="1.2"/><line x1="1.9" y1="8.5" x2="7.1" y2="8.5" stroke="#ffffff" stroke-width="1.2"/><line x1="1.0" y1="9.4" x2="1.0" y2="15.1" stroke="#ffffff" stroke-width="1.2"/><line x1="1.9" y1="16" x2="7.1" y2="16" stroke="#ffffff" stroke-width="1.2"/><line x1="10.9" y1="1" x2="16.1" y2="1" stroke="#ffffff" stroke-width="1.2"/><line x1="17.0" y1="1.9" x2="17.0" y2="7.6" stroke="#ffffff" stroke-width="1.2"/><line x1="10.9" y1="8.5" x2="16.1" y2="8.5" stroke="#ffffff" stroke-width="1.2"/><line x1="10.0" y1="9.4" x2="10.0" y2="15.1" stroke="#ffffff" stroke-width="1.2"/><line x1="10.9" y1="16" x2="16.1" y2="16" stroke="#ffffff" stroke-width="1.2"/><line x1="19.9" y1="1" x2="25.1" y2="1" stroke="#ffffff" stroke-width="1.2"/><line x1="26.0" y1="1.9" x2="26.0" y2="7.6" stroke="#ffffff" stroke-width="1.2"/><line x1="26.0" y1="9.4" x2="26.0" y2="15.1" stroke="#ffffff" stroke-width="1.2"/><line x1="19.9" y1="16" x2="25.1" y2="16" stroke="#ffffff" stroke-width="1.2"/><line x1="19.0" y1="1.9" x2="19.0" y2="7.6" stroke="#ffffff" stroke-width="1.2"/><line x1="19.9" y1="8.5" x2="25.1" y2="8.5" stroke="#ffffff" stroke-width="1.2"/><line x1="28.9" y1="1" x2="34.1" y2="1" stroke="#ffffff" stroke-width="1.2"/><line x1="35.0" y1="1.9" x2="35.0" y2="7.6" stroke="#ffffff" stroke-width="1.2"/><line x1="35.0" y1="9.4" x2="35.0" y2="15.1" stroke="#ffffff" stroke-width="1.2"/><line x1="28.9" y1="16" x2="34.1" y2="16" stroke="#ffffff" stroke-width="1.2"/><line x1="28.0" y1="9.4" x2="28.0" y2="15.1" stroke="#ffffff" stroke-width="1.2"/><line x1="28.0" y1="1.9" x2="28.0" y2="7.6" stroke="#ffffff" stroke-width="1.2"/><line x1="28.9" y1="8.5" x2="34.1" y2="8.5" stroke="#ffffff" stroke-width="1.2"/><line x1="37.9" y1="1" x2="43.1" y2="1" stroke="#ffffff" stroke-width="1.2"/><line x1="37.0" y1="1.9" x2="37.0" y2="7.6" stroke="#ffffff" stroke-width="1.2"/><line x1="37.9" y1="8.5" x2="43.1" y2="8.5" stroke="#ffffff" stroke-width="1.2"/><line x1="37.0" y1="9.4" x2="37.0" y2="15.1" stroke="#ffffff" stroke-width="1.2"/><line x1="37.9" y1="16" x2="43.1" y2="16" stroke="#ffffff" stroke-width="1.2"/><line x1="44.0" y1="9.4" x2="44.0" y2="15.1" stroke="#ffffff" stroke-width="1.2"/></svg>
<svg class="a" style="left:2480px;top:1337px" width="49.0" height="19"><line x1="1.9" y1="1" x2="7.1" y2="1" stroke="#bcbcbc" stroke-width="1.2"/><line x1="8.0" y1="1.9" x2="8.0" y2="7.6" stroke="#bcbcbc" stroke-width="1.2"/><line x1="1.9" y1="8.5" x2="7.1" y2="8.5" stroke="#bcbcbc" stroke-width="1.2"/><line x1="1.0" y1="9.4" x2="1.0" y2="15.1" stroke="#bcbcbc" stroke-width="1.2"/><line x1="1.9" y1="16" x2="7.1" y2="16" stroke="#bcbcbc" stroke-width="1.2"/><line x1="10.9" y1="1" x2="16.1" y2="1" stroke="#bcbcbc" stroke-width="1.2"/><line x1="17.0" y1="1.9" x2="17.0" y2="7.6" stroke="#bcbcbc" stroke-width="1.2"/><line x1="10.9" y1="8.5" x2="16.1" y2="8.5" stroke="#bcbcbc" stroke-width="1.2"/><line x1="10.0" y1="9.4" x2="10.0" y2="15.1" stroke="#bcbcbc" stroke-width="1.2"/><line x1="10.9" y1="16" x2="16.1" y2="16" stroke="#bcbcbc" stroke-width="1.2"/><line x1="19.9" y1="1" x2="25.1" y2="1" stroke="#bcbcbc" stroke-width="1.2"/><line x1="26.0" y1="1.9" x2="26.0" y2="7.6" stroke="#bcbcbc" stroke-width="1.2"/><line x1="26.0" y1="9.4" x2="26.0" y2="15.1" stroke="#bcbcbc" stroke-width="1.2"/><line x1="19.9" y1="16" x2="25.1" y2="16" stroke="#bcbcbc" stroke-width="1.2"/><line x1="19.0" y1="1.9" x2="19.0" y2="7.6" stroke="#bcbcbc" stroke-width="1.2"/><line x1="19.9" y1="8.5" x2="25.1" y2="8.5" stroke="#bcbcbc" stroke-width="1.2"/><line x1="28.9" y1="1" x2="34.1" y2="1" stroke="#bcbcbc" stroke-width="1.2"/><line x1="35.0" y1="1.9" x2="35.0" y2="7.6" stroke="#bcbcbc" stroke-width="1.2"/><line x1="35.0" y1="9.4" x2="35.0" y2="15.1" stroke="#bcbcbc" stroke-width="1.2"/><line x1="28.9" y1="16" x2="34.1" y2="16" stroke="#bcbcbc" stroke-width="1.2"/><line x1="28.0" y1="9.4" x2="28.0" y2="15.1" stroke="#bcbcbc" stroke-width="1.2"/><line x1="28.0" y1="1.9" x2="28.0" y2="7.6" stroke="#bcbcbc" stroke-width="1.2"/><line x1="28.9" y1="8.5" x2="34.1" y2="8.5" stroke="#bcbcbc" stroke-width="1.2"/><line x1="37.9" y1="1" x2="43.1" y2="1" stroke="#bcbcbc" stroke-width="1.2"/><line x1="37.0" y1="1.9" x2="37.0" y2="7.6" stroke="#bcbcbc" stroke-width="1.2"/><line x1="37.9" y1="8.5" x2="43.1" y2="8.5" stroke="#bcbcbc" stroke-width="1.2"/><line x1="37.0" y1="9.4" x2="37.0" y2="15.1" stroke="#bcbcbc" stroke-width="1.2"/><line x1="37.9" y1="16" x2="43.1" y2="16" stroke="#bcbcbc" stroke-width="1.2"/><line x1="44.0" y1="9.4" x2="44.0" y2="15.1" stroke="#bcbcbc" stroke-width="1.2"/></svg>
<svg class="a" style="left:2546px;top:1344px" width="14" height="14"><path d="M2 13 L13 2 M6 13 L13 6 M10 13 L13 10" stroke="#7a7a7a" stroke-width="1"/></svg></body></html>
